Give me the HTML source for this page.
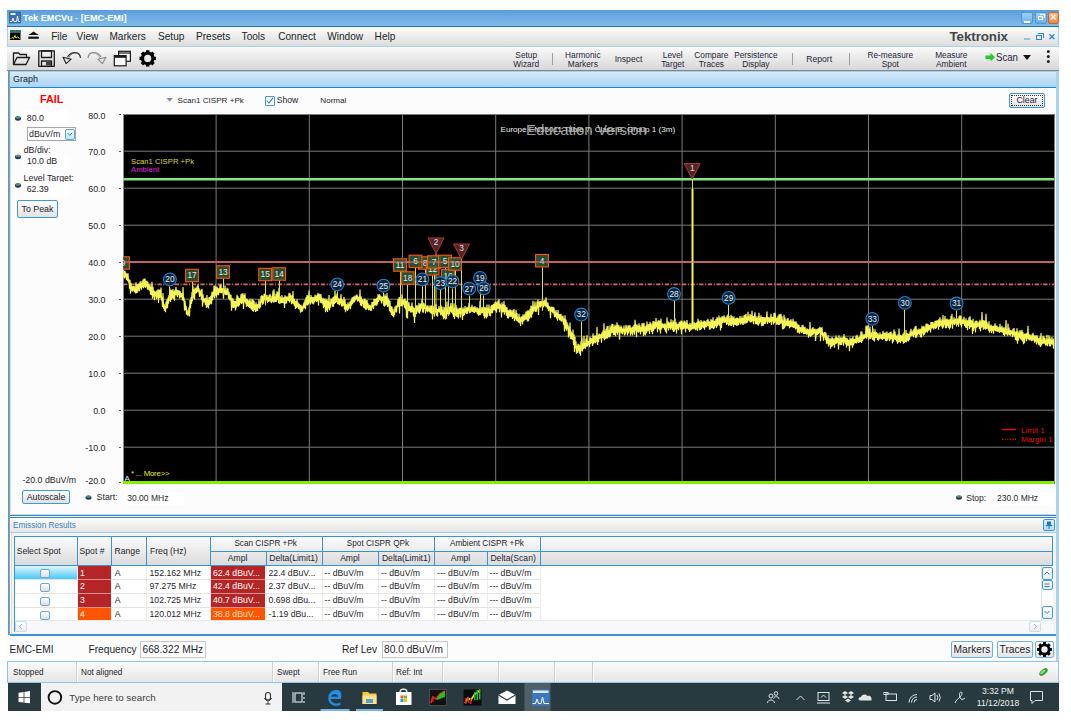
<!DOCTYPE html><html><head><meta charset="utf-8"><style>
html,body{margin:0;padding:0;width:1071px;height:720px;overflow:hidden;background:#fff;font-family:"Liberation Sans", sans-serif;}
.t{position:absolute;white-space:nowrap;}
.b{position:absolute;box-sizing:border-box;}
svg{position:absolute;left:0;top:0;}
</style></head><body>
<div class="b" style="left:7px;top:10px;width:1052px;height:673px;background:#fcfcfc;"></div>
<div class="b" style="left:7px;top:10px;width:1052px;height:17px;background:linear-gradient(#5b9cdb,#80bdec);border-bottom:1px solid #1b79c3;"></div>
<div class="b" style="left:7px;top:27px;width:1052px;height:20px;background:linear-gradient(#fcfcfc,#dcdcdc);border:1px solid #a6d2f0;border-top:none;"></div>
<div class="b" style="left:7px;top:47px;width:1052px;height:24px;background:linear-gradient(#fafafa,#d7d7d7);border-bottom:1px solid #858585;"></div>
<div class="b" style="left:8px;top:71px;width:1.2px;height:564px;background:#8a8a8a;"></div>
<div class="b" style="left:9.2px;top:71px;width:1.1px;height:564px;background:#5aaee4;"></div>
<div class="b" style="left:1055.5px;top:71px;width:3.5px;height:590px;background:#a8d4ee;"></div>
<div class="b" style="left:1055px;top:71px;width:1px;height:564px;background:#c8c8c8;"></div>
<div class="b" style="left:10px;top:71px;width:1046px;height:17px;background:linear-gradient(#d4eafa,#a9d4f4);border-top:1px solid #a0d0f0;border-bottom:1.5px solid #1f7fc8;"></div>
<div class="t" style="left:13px;top:74.1px;font-size:9px;line-height:10.8px;color:#1a1a2a;font-weight:normal;">Graph</div>
<div class="b" style="left:10px;top:88px;width:1046px;height:427px;background:#fcfcfc;border-left:1px solid #e0e0e0;border-bottom:1px solid #d8d8d8;"></div>
<div class="b" style="left:10px;top:515px;width:1046px;height:1px;background:#2587cc;"></div>
<div class="b" style="left:10px;top:516px;width:1046px;height:1px;background:#ffffff;"></div>
<div class="b" style="left:10px;top:517px;width:1046px;height:16px;background:linear-gradient(#fbfbfb,#e6e6e6);border-top:1px solid #2587cc;border-bottom:1px solid #9ccdee;"></div>
<div class="t" style="left:13px;top:520.6px;font-size:8.2px;line-height:9.8px;color:#3b7fc0;font-weight:normal;">Emission Results</div>
<div class="b" style="left:1043px;top:519px;width:12px;height:12px;background:linear-gradient(#e0f0fc,#b8dcf6);border:1px solid #3a96d8;border-radius:2px;"></div>
<svg width="1071" height="720"><g fill="#1a7ac8"><rect x="1047" y="521.5" width="4" height="4"/><rect x="1045.8" y="525" width="6.4" height="1.2"/><rect x="1048.5" y="526" width="1" height="3"/></g></svg>
<svg width="1071" height="720" style="pointer-events:none">
<rect x="9.5" y="12" width="11" height="11" fill="#3b6fae" stroke="#29578e" stroke-width="0.6"/>
<rect x="10.5" y="13" width="5" height="2" fill="#fff" opacity="0.9"/>
<polyline points="10,21.5 12,21.5 13,18 14,21.5 16.5,21.5 17.5,16 18.5,21.5 20,21.5" fill="none" stroke="#fff" stroke-width="0.9"/>
</svg>
<div class="t" style="left:23px;top:12.8px;font-size:9.2px;line-height:11.0px;color:#ffffff;font-weight:bold;">Tek EMCVu <span style="color:#c8e2f8">-</span> [EMC-EMI]</div>
<div class="b" style="left:1021px;top:12px;width:12px;height:12px;background:linear-gradient(#9fd0f6,#6eb0e8);border:1px solid #5496d2;border-radius:2px;"></div>
<div class="b" style="left:1024px;top:21px;width:6px;height:1.5px;background:#fff;"></div>
<div class="b" style="left:1035px;top:12px;width:12px;height:12px;background:linear-gradient(#9fd0f6,#6eb0e8);border:1px solid #5496d2;border-radius:2px;"></div>
<div class="b" style="left:1038px;top:16px;width:5px;height:4px;border:1px solid #fff;"></div>
<div class="b" style="left:1040px;top:14px;width:5px;height:4px;border:1px solid #fff;border-left:none;border-bottom:none;"></div>
<div class="b" style="left:1048px;top:12px;width:11px;height:12px;background:linear-gradient(#f8b888,#e88a48);border:1px solid #c06a30;border-radius:2px;"></div>
<div class="t" style="left:903.5px;width:300px;text-align:center;top:13.2px;font-size:8px;line-height:9.6px;color:#ffffff;font-weight:bold;">&#x2715;</div>
<svg width="1071" height="720">
<rect x="10" y="30" width="10.5" height="10" fill="#000"/>
<rect x="10" y="30" width="10.5" height="3" fill="#177a78"/>
<rect x="14.5" y="30.5" width="1.6" height="1" fill="#e84020"/>
<polyline points="10.5,39 12,37.5 13.5,38.5 15,35.5 16,38 17.5,37 19.5,38.5" fill="none" stroke="#e8e800" stroke-width="1"/>
<polygon points="28.5,35 33.6,31.6 38.7,35" fill="#111"/>
<rect x="28.3" y="36.6" width="10.5" height="2.2" fill="#111"/>
</svg>
<div class="t" style="left:51.2px;top:30.8px;font-size:10.1px;line-height:12.1px;color:#1e1e1e;font-weight:normal;">File</div>
<div class="t" style="left:76.6px;top:30.8px;font-size:10.1px;line-height:12.1px;color:#1e1e1e;font-weight:normal;">View</div>
<div class="t" style="left:109.4px;top:30.8px;font-size:10.1px;line-height:12.1px;color:#1e1e1e;font-weight:normal;">Markers</div>
<div class="t" style="left:158px;top:30.8px;font-size:10.1px;line-height:12.1px;color:#1e1e1e;font-weight:normal;">Setup</div>
<div class="t" style="left:196px;top:30.8px;font-size:10.1px;line-height:12.1px;color:#1e1e1e;font-weight:normal;">Presets</div>
<div class="t" style="left:241.6px;top:30.8px;font-size:10.1px;line-height:12.1px;color:#1e1e1e;font-weight:normal;">Tools</div>
<div class="t" style="left:278.2px;top:30.8px;font-size:10.1px;line-height:12.1px;color:#1e1e1e;font-weight:normal;">Connect</div>
<div class="t" style="left:327.2px;top:30.8px;font-size:10.1px;line-height:12.1px;color:#1e1e1e;font-weight:normal;">Window</div>
<div class="t" style="left:374.6px;top:30.8px;font-size:10.1px;line-height:12.1px;color:#1e1e1e;font-weight:normal;">Help</div>
<div class="t" style="left:949.5px;top:29.0px;font-size:13.4px;line-height:16.1px;color:#464646;font-weight:bold;letter-spacing:-0.1px;">Tektronix</div>
<div class="b" style="left:1024px;top:38px;width:6px;height:1.5px;background:#8ec4ea;"></div>
<div class="b" style="left:1036px;top:35px;width:6px;height:5px;border:1.5px solid #2a88d0;"></div>
<div class="b" style="left:1038px;top:33px;width:6px;height:5px;border:1.5px solid #2a88d0;border-left:none;border-bottom:none;"></div>
<div class="t" style="left:901.5px;width:300px;text-align:center;top:32.4px;font-size:8.5px;line-height:10.2px;color:#2a88d0;font-weight:bold;">&#x2715;</div>
<svg width="1071" height="720">
<g fill="none" stroke="#1a1a1a" stroke-width="1.3" stroke-linejoin="round">
<path d="M13.5,64.5 V53 H18.5 L20,54.5 H26.5 V57.5"/>
<path d="M13.5,64.5 L17,57.5 H29.5 L26,64.5 Z"/>
<rect x="38.8" y="50.8" width="15.5" height="15.5"/>
<rect x="41.5" y="51" width="10" height="6.5"/>
<rect x="41.5" y="61" width="10" height="5.3"/>
</g>
<rect x="46" y="62" width="5" height="3.5" fill="#444"/>
<path d="M80.5,58 C80,51.5 72,50.5 67.5,56.8" fill="none" stroke="#333" stroke-width="1.2"/>
<path d="M76.5,53 C73,52.5 70.5,54.5 68.8,57.8" fill="none" stroke="#555" stroke-width="0.8"/>
<polygon points="63,57.3 66.1,63.6 71.2,59.2" fill="#e0e0e0" stroke="#222" stroke-width="1.1" stroke-linejoin="round"/>
<path d="M88,58 C88.5,51.5 96.5,50.5 101,56.8" fill="none" stroke="#8a8a8a" stroke-width="1.2"/>
<path d="M92,53 C95.5,52.5 98,54.5 99.7,57.8" fill="none" stroke="#9a9a9a" stroke-width="0.8"/>
<polygon points="106,57.3 102.5,63.6 97.8,59.2" fill="#e4e4e4" stroke="#8a8a8a" stroke-width="1.1" stroke-linejoin="round"/>
<g fill="#fafafa" stroke="#1a1a1a" stroke-width="1.2">
<rect x="118.6" y="51.3" width="11.8" height="10"/>
<line x1="118.6" y1="53" x2="130.4" y2="53"/>
<rect x="114.3" y="55.6" width="11.8" height="10.2"/>
</g>
<rect x="114.3" y="55.6" width="11.8" height="2.2" fill="#1a1a1a"/>
<g transform="translate(147.7,58.4)">
<circle r="5.2" fill="none" stroke="#000" stroke-width="3.2"/>
<g fill="#000">
<rect x="-1.7" y="-8.2" width="3.4" height="3.6"/><rect x="-1.7" y="4.6" width="3.4" height="3.6"/>
<rect x="-8.2" y="-1.7" width="3.6" height="3.4"/><rect x="4.6" y="-1.7" width="3.6" height="3.4"/>
<g transform="rotate(45)"><rect x="-1.7" y="-8.2" width="3.4" height="3.6"/><rect x="-1.7" y="4.6" width="3.4" height="3.6"/>
<rect x="-8.2" y="-1.7" width="3.6" height="3.4"/><rect x="4.6" y="-1.7" width="3.6" height="3.4"/></g>
</g></g>
</svg>
<div class="t" style="left:376.20000000000005px;width:300px;text-align:center;top:49.5px;font-size:8.3px;line-height:10.0px;color:#1e1e3a;font-weight:normal;">Setup</div>
<div class="t" style="left:376.20000000000005px;width:300px;text-align:center;top:59.2px;font-size:8.3px;line-height:10.0px;color:#1e1e3a;font-weight:normal;">Wizard</div>
<div class="t" style="left:432.79999999999995px;width:300px;text-align:center;top:49.5px;font-size:8.3px;line-height:10.0px;color:#1e1e3a;font-weight:normal;">Harmonic</div>
<div class="t" style="left:432.79999999999995px;width:300px;text-align:center;top:59.2px;font-size:8.3px;line-height:10.0px;color:#1e1e3a;font-weight:normal;">Markers</div>
<div class="t" style="left:478.5px;width:300px;text-align:center;top:54.3px;font-size:8.6px;line-height:10.3px;color:#1e1e3a;font-weight:normal;">Inspect</div>
<div class="t" style="left:522.7px;width:300px;text-align:center;top:49.5px;font-size:8.3px;line-height:10.0px;color:#1e1e3a;font-weight:normal;">Level</div>
<div class="t" style="left:522.7px;width:300px;text-align:center;top:59.2px;font-size:8.3px;line-height:10.0px;color:#1e1e3a;font-weight:normal;">Target</div>
<div class="t" style="left:561.4px;width:300px;text-align:center;top:49.5px;font-size:8.3px;line-height:10.0px;color:#1e1e3a;font-weight:normal;">Compare</div>
<div class="t" style="left:561.4px;width:300px;text-align:center;top:59.2px;font-size:8.3px;line-height:10.0px;color:#1e1e3a;font-weight:normal;">Traces</div>
<div class="t" style="left:605.9px;width:300px;text-align:center;top:49.5px;font-size:8.3px;line-height:10.0px;color:#1e1e3a;font-weight:normal;">Persistence</div>
<div class="t" style="left:605.9px;width:300px;text-align:center;top:59.2px;font-size:8.3px;line-height:10.0px;color:#1e1e3a;font-weight:normal;">Display</div>
<div class="t" style="left:669.2px;width:300px;text-align:center;top:54.3px;font-size:8.6px;line-height:10.3px;color:#1e1e3a;font-weight:normal;">Report</div>
<div class="t" style="left:740.3px;width:300px;text-align:center;top:49.5px;font-size:8.3px;line-height:10.0px;color:#1e1e3a;font-weight:normal;">Re-measure</div>
<div class="t" style="left:740.3px;width:300px;text-align:center;top:59.2px;font-size:8.3px;line-height:10.0px;color:#1e1e3a;font-weight:normal;">Spot</div>
<div class="t" style="left:801.3px;width:300px;text-align:center;top:49.5px;font-size:8.3px;line-height:10.0px;color:#1e1e3a;font-weight:normal;">Measure</div>
<div class="t" style="left:801.3px;width:300px;text-align:center;top:59.2px;font-size:8.3px;line-height:10.0px;color:#1e1e3a;font-weight:normal;">Ambient</div>
<div class="b" style="left:552px;top:53px;width:1px;height:12px;background:#a0a0a0;"></div>
<div class="b" style="left:791.5px;top:53px;width:1px;height:12px;background:#a0a0a0;"></div>
<div class="b" style="left:848.5px;top:53px;width:1px;height:12px;background:#a0a0a0;"></div>
<svg width="1071" height="720">
<polygon points="985.5,55.5 990.5,55.5 990.5,52.8 995,57.2 990.5,61.6 990.5,58.9 985.5,58.9" fill="#22cc22"/>
<polygon points="1023,55 1031,55 1027,60" fill="#111"/>
<circle cx="1048.3" cy="51.5" r="1.5" fill="#222"/><circle cx="1048.3" cy="56.5" r="1.5" fill="#222"/><circle cx="1048.3" cy="61.5" r="1.5" fill="#222"/>
</svg>
<div class="t" style="left:995.5px;top:50.8px;font-size:11.2px;line-height:13.4px;color:#1e1e3a;font-weight:normal;transform:scaleX(0.86);transform-origin:0 0;">Scan</div>
<div class="t" style="left:40px;top:93.3px;font-size:10.8px;line-height:13.0px;color:#ff0000;font-weight:bold;">FAIL</div>
<div class="b" style="left:23px;top:110px;width:45px;height:16px;background:#ffffff;"></div>
<svg width="1071" height="720"><ellipse cx="18" cy="118.5" rx="3" ry="2.2" fill="#2a2a7a"/><ellipse cx="18" cy="117.5" rx="2.5" ry="1.2" fill="#4aa04a"/></svg>
<div class="t" style="left:26.8px;top:113.2px;font-size:8.8px;line-height:10.6px;color:#1e1e2a;font-weight:normal;">80.0</div>
<div class="b" style="left:27px;top:127px;width:49px;height:14px;background:#fff;border:1px solid #a8a8a8;"></div>
<div class="t" style="left:29px;top:128.9px;font-size:8.8px;line-height:10.6px;color:#1e1e2a;font-weight:normal;">dBuV/m</div>
<div class="b" style="left:65px;top:128.5px;width:9.5px;height:11px;background:linear-gradient(#f0f8ff,#c8e4f8);border:1px solid #5aa8e0;border-radius:2px;"></div>
<svg width="1071" height="720"><polyline points="67.5,133 69.7,135.3 72,133" fill="none" stroke="#2a7ac8" stroke-width="1"/></svg>
<div class="t" style="left:23.7px;top:145.0px;font-size:8.8px;line-height:10.6px;color:#1e1e2a;font-weight:normal;">dB/div:</div>
<div class="b" style="left:23px;top:154px;width:45px;height:15px;background:#ffffff;"></div>
<svg width="1071" height="720"><ellipse cx="18" cy="157" rx="3" ry="2.2" fill="#2a2a7a"/><ellipse cx="18" cy="156" rx="2.5" ry="1.2" fill="#4aa04a"/></svg>
<div class="t" style="left:26.9px;top:155.9px;font-size:8.8px;line-height:10.6px;color:#1e1e2a;font-weight:normal;">10.0 dB</div>
<div class="t" style="left:23.6px;top:172.5px;font-size:8.8px;line-height:10.6px;color:#1e1e2a;font-weight:normal;">Level Target:</div>
<div class="b" style="left:23px;top:182px;width:45px;height:15px;background:#ffffff;"></div>
<svg width="1071" height="720"><ellipse cx="18" cy="185.5" rx="3" ry="2.2" fill="#2a2a7a"/><ellipse cx="18" cy="184.5" rx="2.5" ry="1.2" fill="#4aa04a"/></svg>
<div class="t" style="left:26.7px;top:184.1px;font-size:8.8px;line-height:10.6px;color:#1e1e2a;font-weight:normal;">62.39</div>
<div class="b" style="left:17px;top:200px;width:41px;height:18px;background:linear-gradient(#fdfdfd,#e2e2e2);border:1px solid #3c9ad8;border-radius:2px;"></div>
<div class="t" style="left:-112.5px;width:300px;text-align:center;top:203.9px;font-size:8.8px;line-height:10.6px;color:#1e1e2a;font-weight:normal;">To Peak</div>
<div class="t" style="left:-194.5px;width:300px;text-align:right;top:110.9px;font-size:8.9px;line-height:10.7px;color:#1e1e2a;font-weight:normal;">80.0</div>
<div class="b" style="left:119px;top:114px;width:2px;height:1px;background:#555;"></div>
<div class="t" style="left:-194.5px;width:300px;text-align:right;top:146.9px;font-size:8.9px;line-height:10.7px;color:#1e1e2a;font-weight:normal;">70.0</div>
<div class="b" style="left:119px;top:151px;width:2px;height:1px;background:#555;"></div>
<div class="t" style="left:-194.5px;width:300px;text-align:right;top:183.9px;font-size:8.9px;line-height:10.7px;color:#1e1e2a;font-weight:normal;">60.0</div>
<div class="b" style="left:119px;top:188px;width:2px;height:1px;background:#555;"></div>
<div class="t" style="left:-194.5px;width:300px;text-align:right;top:220.9px;font-size:8.9px;line-height:10.7px;color:#1e1e2a;font-weight:normal;">50.0</div>
<div class="b" style="left:119px;top:225px;width:2px;height:1px;background:#555;"></div>
<div class="t" style="left:-194.5px;width:300px;text-align:right;top:257.9px;font-size:8.9px;line-height:10.7px;color:#1e1e2a;font-weight:normal;">40.0</div>
<div class="b" style="left:119px;top:262px;width:2px;height:1px;background:#555;"></div>
<div class="t" style="left:-194.5px;width:300px;text-align:right;top:294.9px;font-size:8.9px;line-height:10.7px;color:#1e1e2a;font-weight:normal;">30.0</div>
<div class="b" style="left:119px;top:299px;width:2px;height:1px;background:#555;"></div>
<div class="t" style="left:-194.5px;width:300px;text-align:right;top:331.9px;font-size:8.9px;line-height:10.7px;color:#1e1e2a;font-weight:normal;">20.0</div>
<div class="b" style="left:119px;top:336px;width:2px;height:1px;background:#555;"></div>
<div class="t" style="left:-194.5px;width:300px;text-align:right;top:368.9px;font-size:8.9px;line-height:10.7px;color:#1e1e2a;font-weight:normal;">10.0</div>
<div class="b" style="left:119px;top:373px;width:2px;height:1px;background:#555;"></div>
<div class="t" style="left:-194.5px;width:300px;text-align:right;top:405.9px;font-size:8.9px;line-height:10.7px;color:#1e1e2a;font-weight:normal;">0.0</div>
<div class="b" style="left:119px;top:410px;width:2px;height:1px;background:#555;"></div>
<div class="t" style="left:-194.5px;width:300px;text-align:right;top:442.9px;font-size:8.9px;line-height:10.7px;color:#1e1e2a;font-weight:normal;">-10.0</div>
<div class="b" style="left:119px;top:447px;width:2px;height:1px;background:#555;"></div>
<div class="t" style="left:-194.5px;width:300px;text-align:right;top:475.5px;font-size:8.9px;line-height:10.7px;color:#1e1e2a;font-weight:normal;">-20.0</div>
<div class="b" style="left:119px;top:482px;width:2px;height:1px;background:#555;"></div>
<div class="t" style="left:22.4px;top:474.9px;font-size:8.8px;line-height:10.6px;color:#1e1e2a;font-weight:normal;">-20.0 dBuV/m</div>
<div class="b" style="left:22px;top:490px;width:48px;height:14px;background:linear-gradient(#fdfdfd,#e0e0e0);border:1px solid #3c9ad8;border-radius:2px;"></div>
<div class="t" style="left:-104px;width:300px;text-align:center;top:491.9px;font-size:8.8px;line-height:10.6px;color:#1e1e2a;font-weight:normal;">Autoscale</div>
<svg width="1071" height="720"><ellipse cx="88.5" cy="497.6" rx="3" ry="2.2" fill="#2a2a7a"/><ellipse cx="88.5" cy="496.6" rx="2.5" ry="1.2" fill="#4aa04a"/></svg>
<div class="t" style="left:96.6px;top:492.3px;font-size:8.8px;line-height:10.6px;color:#1e1e2a;font-weight:normal;">Start:</div>
<div class="b" style="left:124px;top:490px;width:60px;height:15px;background:#ffffff;"></div>
<div class="t" style="left:127.3px;top:492.5px;font-size:8.5px;line-height:10.2px;color:#1e1e2a;font-weight:normal;">30.00 MHz</div>
<svg width="1071" height="720"><ellipse cx="959" cy="497.6" rx="3" ry="2.2" fill="#2a2a7a"/><ellipse cx="959" cy="496.6" rx="2.5" ry="1.2" fill="#4aa04a"/></svg>
<div class="t" style="left:966.3px;top:492.5px;font-size:8.5px;line-height:10.2px;color:#1e1e2a;font-weight:normal;">Stop:</div>
<div class="b" style="left:994px;top:490px;width:60px;height:15px;background:#ffffff;"></div>
<div class="t" style="left:997px;top:492.5px;font-size:8.5px;line-height:10.2px;color:#1e1e2a;font-weight:normal;">230.0 MHz</div>
<svg width="1071" height="720"><polygon points="166.5,98 173,98 169.7,101.5" fill="#7a8aa8"/></svg>
<div class="t" style="left:177.5px;top:96.1px;font-size:8.1px;line-height:9.7px;color:#1e1e2a;font-weight:normal;">Scan1 CISPR +Pk</div>
<div class="b" style="left:265px;top:96px;width:9.5px;height:9.5px;background:#fff;border:1px solid #3c9ad8;border-radius:1px;"></div>
<svg width="1071" height="720"><polyline points="266.8,100.5 269,103 273,97.8" fill="none" stroke="#2a7ac8" stroke-width="1.1"/></svg>
<div class="t" style="left:276.8px;top:95.4px;font-size:8.6px;line-height:10.3px;color:#1e1e2a;font-weight:normal;">Show</div>
<div class="t" style="left:320.3px;top:96.1px;font-size:8.1px;line-height:9.7px;color:#1e1e2a;font-weight:normal;">Normal</div>
<div class="b" style="left:1009px;top:93px;width:36px;height:15px;background:linear-gradient(#fdfdfd,#e2e2e2);border:1px solid #3c9ad8;border-radius:2px;"></div>
<div class="b" style="left:1011px;top:95px;width:32px;height:11px;border:1px dotted #333;"></div>
<div class="t" style="left:877px;width:300px;text-align:center;top:95.3px;font-size:8.8px;line-height:10.6px;color:#1e1e2a;font-weight:normal;">Clear</div>
<svg width="1071" height="720"><defs><clipPath id="pc"><rect x="123" y="114" width="931.5" height="370"/></clipPath></defs>
<rect x="123" y="114" width="931.5" height="370" fill="#000"/>
<g clip-path="url(#pc)">
<line x1="123" y1="114.5" x2="1054.5" y2="114.5" stroke="#7a7a7a" stroke-width="1"/>
<line x1="123.5" y1="114" x2="123.5" y2="484" stroke="#8a8a8a" stroke-width="1"/>
<line x1="216.1" y1="114" x2="216.1" y2="484" stroke="#7a7a7a" stroke-width="1"/>
<line x1="309.3" y1="114" x2="309.3" y2="484" stroke="#7a7a7a" stroke-width="1"/>
<line x1="402.5" y1="114" x2="402.5" y2="484" stroke="#7a7a7a" stroke-width="1"/>
<line x1="495.7" y1="114" x2="495.7" y2="484" stroke="#7a7a7a" stroke-width="1"/>
<line x1="588.9" y1="114" x2="588.9" y2="484" stroke="#7a7a7a" stroke-width="1"/>
<line x1="682.1" y1="114" x2="682.1" y2="484" stroke="#7a7a7a" stroke-width="1"/>
<line x1="775.3" y1="114" x2="775.3" y2="484" stroke="#7a7a7a" stroke-width="1"/>
<line x1="868.5" y1="114" x2="868.5" y2="484" stroke="#7a7a7a" stroke-width="1"/>
<line x1="961.7" y1="114" x2="961.7" y2="484" stroke="#7a7a7a" stroke-width="1"/>
<line x1="123" y1="151.2" x2="1054.5" y2="151.2" stroke="#7a7a7a" stroke-width="1"/>
<line x1="123" y1="188.2" x2="1054.5" y2="188.2" stroke="#7a7a7a" stroke-width="1"/>
<line x1="123" y1="225.2" x2="1054.5" y2="225.2" stroke="#7a7a7a" stroke-width="1"/>
<line x1="123" y1="262.2" x2="1054.5" y2="262.2" stroke="#7a7a7a" stroke-width="1"/>
<line x1="123" y1="299.2" x2="1054.5" y2="299.2" stroke="#7a7a7a" stroke-width="1"/>
<line x1="123" y1="336.2" x2="1054.5" y2="336.2" stroke="#7a7a7a" stroke-width="1"/>
<line x1="123" y1="373.2" x2="1054.5" y2="373.2" stroke="#7a7a7a" stroke-width="1"/>
<line x1="123" y1="410.2" x2="1054.5" y2="410.2" stroke="#7a7a7a" stroke-width="1"/>
<line x1="123" y1="447.2" x2="1054.5" y2="447.2" stroke="#7a7a7a" stroke-width="1"/>
<text x="500.5" y="131.8" font-size="8.1" fill="#f0f0f0" font-family="Liberation Sans">Europe EN55011 Table 7, Class B, Group 1 (3m)</text>
<text x="526" y="134.5" font-size="15" fill="#b4b4b4" fill-opacity="0.9" font-family="Liberation Sans">Education Version</text>
<text x="131" y="164" font-size="7.7" fill="#d8d840" font-family="Liberation Sans">Scan1 CISPR +Pk</text>
<text x="131" y="172" font-size="7.7" fill="#e020e0" font-family="Liberation Sans">Ambient</text>
<line x1="1002" y1="429.5" x2="1016" y2="429.5" stroke="#e01010" stroke-width="1.5"/>
<line x1="1002" y1="439.3" x2="1016" y2="439.3" stroke="#e01010" stroke-width="1.2" stroke-dasharray="1.3,1.3"/>
<text x="1021" y="432.5" font-size="8.1" fill="#e01010" font-family="Liberation Sans">Limit 1</text>
<text x="1021" y="442.3" font-size="8.1" fill="#e01010" font-family="Liberation Sans">Margin 1</text>
<text x="124.6" y="481" font-size="8" fill="#f0f0f0" font-family="Liberation Sans">A</text>
<text x="131" y="476" font-size="7.8" fill="#e8e830" font-family="Liberation Sans" letter-spacing="-0.2">* ... More&gt;&gt;</text>
<line x1="123" y1="179.3" x2="1054.5" y2="179.3" stroke="#80e680" stroke-width="2.6"/>
<line x1="123" y1="262" x2="1054.5" y2="262" stroke="#b85454" stroke-width="2"/>
<line x1="123" y1="284.4" x2="1054.5" y2="284.4" stroke="#d06a6a" stroke-width="1.6" stroke-dasharray="4.3,1.6,1.1,1.6"/>
<rect x="123" y="481" width="931.5" height="3" fill="#80f000"/>
<polygon points="123.0,270.3 123.5,271.1 124.0,271.5 124.5,272.1 125.0,273.2 125.5,273.3 126.0,273.2 126.5,274.1 127.0,275.8 127.5,276.6 128.0,278.3 128.5,279.4 129.0,280.7 129.5,281.7 130.0,283.4 130.5,284.7 131.0,285.6 131.5,285.6 132.0,285.3 132.5,286.3 133.0,286.2 133.5,285.4 134.0,286.3 134.5,286.6 135.0,286.2 135.5,286.1 136.0,287.1 136.5,286.6 137.0,287.1 137.5,286.3 138.0,286.2 138.5,285.6 139.0,285.5 139.5,284.9 140.0,284.1 140.5,284.3 141.0,283.5 141.5,283.5 142.0,283.2 142.5,282.2 143.0,281.7 143.5,281.8 144.0,281.4 144.5,280.4 145.0,281.3 145.5,281.6 146.0,282.1 146.5,282.3 147.0,283.3 147.5,284.1 148.0,285.0 148.5,285.3 149.0,285.7 149.5,287.0 150.0,287.7 150.5,287.6 151.0,289.4 151.5,290.2 152.0,290.6 152.5,290.9 153.0,291.3 153.5,291.2 154.0,291.0 154.5,291.3 155.0,291.7 155.5,291.5 156.0,291.6 156.5,291.3 157.0,291.7 157.5,292.0 158.0,291.7 158.5,291.3 159.0,291.0 159.5,291.1 160.0,291.6 160.5,293.5 161.0,295.3 161.5,296.3 162.0,297.7 162.5,299.3 163.0,301.3 163.5,302.4 164.0,303.8 164.5,306.3 165.0,307.2 165.5,306.4 166.0,304.0 166.5,302.2 167.0,300.9 167.5,300.2 168.0,298.7 168.5,296.6 169.0,296.0 169.5,294.4 170.0,293.3 170.5,293.3 171.0,292.9 171.5,292.4 172.0,292.4 172.5,292.3 173.0,292.3 173.5,292.0 174.0,291.1 174.5,291.5 175.0,290.8 175.5,291.3 176.0,290.3 176.5,290.2 177.0,290.5 177.5,289.2 178.0,290.4 178.5,290.7 179.0,290.6 179.5,291.2 180.0,290.9 180.5,292.6 181.0,293.2 181.5,293.7 182.0,294.0 182.5,294.9 183.0,295.3 183.5,297.2 184.0,298.4 184.5,300.9 185.0,302.1 185.5,304.3 186.0,306.1 186.5,306.6 187.0,308.9 187.5,311.1 188.0,313.1 188.5,310.7 189.0,308.4 189.5,305.6 190.0,303.6 190.5,301.2 191.0,299.5 191.5,296.8 192.0,294.5 192.5,292.4 193.0,291.5 193.5,291.5 194.0,291.3 194.5,290.8 195.0,290.3 195.5,288.7 196.0,289.6 196.5,289.1 197.0,288.1 197.5,288.1 198.0,287.6 198.5,288.5 199.0,288.6 199.5,290.4 200.0,290.6 200.5,291.4 201.0,293.2 201.5,294.4 202.0,295.3 202.5,296.2 203.0,297.1 203.5,297.9 204.0,298.5 204.5,298.2 205.0,299.7 205.5,299.8 206.0,300.8 206.5,301.1 207.0,301.5 207.5,301.9 208.0,302.8 208.5,301.5 209.0,300.5 209.5,299.0 210.0,298.0 210.5,296.6 211.0,295.5 211.5,294.6 212.0,293.0 212.5,292.0 213.0,291.9 213.5,291.6 214.0,291.2 214.5,291.2 215.0,290.5 215.5,290.3 216.0,289.8 216.5,289.1 217.0,288.9 217.5,288.5 218.0,289.3 218.5,288.5 219.0,289.3 219.5,288.1 220.0,287.9 220.5,288.1 221.0,288.8 221.5,288.7 222.0,288.0 222.5,288.8 223.0,288.3 223.5,288.9 224.0,289.3 224.5,289.0 225.0,289.8 225.5,289.8 226.0,290.2 226.5,290.0 227.0,289.9 227.5,291.1 228.0,292.3 228.5,292.8 229.0,294.3 229.5,294.3 230.0,295.8 230.5,297.0 231.0,297.8 231.5,298.9 232.0,300.1 232.5,300.8 233.0,299.8 233.5,302.0 234.0,302.0 234.5,302.9 235.0,303.0 235.5,303.7 236.0,304.7 236.5,303.9 237.0,302.5 237.5,302.7 238.0,301.1 238.5,300.9 239.0,298.9 239.5,299.3 240.0,298.3 240.5,297.5 241.0,296.7 241.5,296.8 242.0,296.9 242.5,296.7 243.0,297.9 243.5,298.2 244.0,298.3 244.5,298.2 245.0,297.9 245.5,299.1 246.0,299.2 246.5,299.3 247.0,299.7 247.5,299.7 248.0,300.4 248.5,300.4 249.0,299.7 249.5,300.9 250.0,301.4 250.5,301.8 251.0,301.7 251.5,302.6 252.0,302.8 252.5,302.5 253.0,303.0 253.5,303.8 254.0,304.4 254.5,303.9 255.0,304.2 255.5,305.1 256.0,304.8 256.5,305.5 257.0,305.9 257.5,304.1 258.0,304.1 258.5,303.7 259.0,302.7 259.5,302.2 260.0,301.6 260.5,300.6 261.0,300.1 261.5,298.7 262.0,298.8 262.5,298.0 263.0,297.2 263.5,296.2 264.0,295.9 264.5,295.4 265.0,296.4 265.5,296.6 266.0,296.7 266.5,296.8 267.0,297.1 267.5,297.0 268.0,297.4 268.5,296.7 269.0,297.1 269.5,297.8 270.0,297.3 270.5,298.4 271.0,298.5 271.5,298.5 272.0,297.7 272.5,298.1 273.0,295.7 273.5,297.1 274.0,297.6 274.5,297.5 275.0,297.4 275.5,296.0 276.0,296.3 276.5,296.6 277.0,296.6 277.5,295.3 278.0,295.7 278.5,296.4 279.0,294.7 279.5,296.6 280.0,296.8 280.5,297.7 281.0,298.0 281.5,297.7 282.0,298.6 282.5,298.5 283.0,299.2 283.5,297.8 284.0,299.1 284.5,297.7 285.0,299.2 285.5,298.3 286.0,298.1 286.5,298.1 287.0,296.5 287.5,296.9 288.0,296.6 288.5,296.7 289.0,296.5 289.5,296.0 290.0,295.1 290.5,295.3 291.0,295.1 291.5,295.2 292.0,296.7 292.5,297.4 293.0,297.7 293.5,298.5 294.0,299.1 294.5,298.3 295.0,300.2 295.5,301.1 296.0,302.0 296.5,302.0 297.0,303.0 297.5,303.7 298.0,302.7 298.5,304.8 299.0,305.1 299.5,304.9 300.0,305.2 300.5,306.0 301.0,306.7 301.5,306.4 302.0,308.0 302.5,307.4 303.0,305.7 303.5,305.3 304.0,304.2 304.5,302.3 305.0,302.0 305.5,301.0 306.0,300.1 306.5,299.0 307.0,298.3 307.5,298.1 308.0,298.3 308.5,297.7 309.0,297.9 309.5,297.8 310.0,297.8 310.5,297.0 311.0,298.2 311.5,297.6 312.0,298.0 312.5,298.0 313.0,297.9 313.5,298.2 314.0,298.0 314.5,297.6 315.0,297.0 315.5,297.3 316.0,297.5 316.5,296.3 317.0,295.6 317.5,296.8 318.0,296.6 318.5,296.5 319.0,296.3 319.5,296.2 320.0,295.1 320.5,296.7 321.0,297.3 321.5,298.1 322.0,298.5 322.5,299.3 323.0,300.2 323.5,300.5 324.0,301.7 324.5,302.2 325.0,302.5 325.5,303.6 326.0,304.0 326.5,304.0 327.0,305.0 327.5,304.1 328.0,304.0 328.5,303.7 329.0,302.9 329.5,302.4 330.0,301.4 330.5,301.4 331.0,299.9 331.5,300.4 332.0,298.9 332.5,299.3 333.0,298.1 333.5,297.6 334.0,297.9 334.5,298.0 335.0,297.1 335.5,297.8 336.0,297.0 336.5,297.6 337.0,297.5 337.5,298.4 338.0,298.7 338.5,299.1 339.0,298.3 339.5,298.5 340.0,299.2 340.5,299.2 341.0,299.6 341.5,299.2 342.0,300.5 342.5,300.6 343.0,300.5 343.5,301.9 344.0,302.5 344.5,302.3 345.0,302.5 345.5,303.5 346.0,303.7 346.5,304.3 347.0,304.7 347.5,305.1 348.0,304.9 348.5,303.9 349.0,304.3 349.5,303.7 350.0,302.8 350.5,301.3 351.0,302.0 351.5,300.6 352.0,299.1 352.5,299.7 353.0,299.5 353.5,298.9 354.0,296.7 354.5,297.4 355.0,296.2 355.5,296.3 356.0,295.8 356.5,296.0 357.0,295.6 357.5,296.3 358.0,296.3 358.5,297.3 359.0,297.7 359.5,297.5 360.0,297.2 360.5,298.5 361.0,298.1 361.5,298.2 362.0,298.7 362.5,299.6 363.0,299.0 363.5,301.0 364.0,300.9 364.5,301.9 365.0,301.8 365.5,302.4 366.0,303.2 366.5,303.9 367.0,304.3 367.5,304.9 368.0,304.8 368.5,305.9 369.0,306.2 369.5,306.0 370.0,306.5 370.5,306.2 371.0,305.8 371.5,305.2 372.0,304.0 372.5,303.4 373.0,302.9 373.5,302.6 374.0,302.0 374.5,301.0 375.0,300.4 375.5,299.8 376.0,299.6 376.5,298.4 377.0,298.4 377.5,298.0 378.0,297.2 378.5,297.0 379.0,296.0 379.5,295.7 380.0,295.7 380.5,296.3 381.0,296.8 381.5,296.1 382.0,296.8 382.5,296.5 383.0,296.8 383.5,297.1 384.0,296.8 384.5,297.5 385.0,297.9 385.5,297.8 386.0,297.8 386.5,298.6 387.0,298.9 387.5,299.8 388.0,300.8 388.5,302.1 389.0,303.3 389.5,304.8 390.0,306.1 390.5,307.2 391.0,308.0 391.5,309.0 392.0,310.7 392.5,312.2 393.0,312.5 393.5,312.0 394.0,310.7 394.5,309.6 395.0,308.5 395.5,308.2 396.0,307.1 396.5,305.4 397.0,304.9 397.5,303.9 398.0,302.1 398.5,301.8 399.0,300.6 399.5,300.0 400.0,298.6 400.5,299.0 401.0,299.5 401.5,299.6 402.0,299.2 402.5,300.1 403.0,300.9 403.5,300.8 404.0,300.9 404.5,301.3 405.0,301.9 405.5,302.8 406.0,302.7 406.5,303.6 407.0,303.0 407.5,304.5 408.0,304.1 408.5,305.2 409.0,305.0 409.5,306.0 410.0,305.8 410.5,306.6 411.0,306.8 411.5,307.2 412.0,308.3 412.5,307.8 413.0,309.1 413.5,309.1 414.0,310.1 414.5,310.4 415.0,310.3 415.5,310.7 416.0,309.0 416.5,309.1 417.0,307.5 417.5,306.2 418.0,307.0 418.5,305.0 419.0,305.4 419.5,304.5 420.0,304.3 420.5,304.3 421.0,304.2 421.5,303.7 422.0,304.1 422.5,304.7 423.0,305.0 423.5,304.5 424.0,304.5 424.5,304.5 425.0,305.4 425.5,305.1 426.0,306.5 426.5,306.7 427.0,306.1 427.5,307.2 428.0,307.5 428.5,307.0 429.0,307.4 429.5,308.0 430.0,308.0 430.5,307.9 431.0,308.3 431.5,308.5 432.0,309.1 432.5,308.4 433.0,309.1 433.5,308.4 434.0,308.1 434.5,308.6 435.0,309.2 435.5,309.2 436.0,308.4 436.5,308.3 437.0,309.2 437.5,309.0 438.0,308.8 438.5,308.8 439.0,308.7 439.5,308.8 440.0,308.6 440.5,308.8 441.0,309.3 441.5,309.2 442.0,309.9 442.5,309.9 443.0,308.8 443.5,310.3 444.0,310.7 444.5,310.2 445.0,310.1 445.5,309.9 446.0,309.9 446.5,310.3 447.0,308.3 447.5,309.4 448.0,308.5 448.5,308.8 449.0,306.9 449.5,306.7 450.0,307.3 450.5,308.0 451.0,307.3 451.5,307.6 452.0,307.4 452.5,307.8 453.0,307.7 453.5,308.3 454.0,308.2 454.5,308.5 455.0,308.4 455.5,308.7 456.0,308.6 456.5,309.0 457.0,309.5 457.5,309.4 458.0,309.1 458.5,309.6 459.0,308.5 459.5,309.6 460.0,309.5 460.5,309.3 461.0,308.9 461.5,308.5 462.0,309.4 462.5,308.7 463.0,308.5 463.5,308.2 464.0,309.1 464.5,308.5 465.0,309.0 465.5,308.4 466.0,308.5 466.5,307.5 467.0,308.2 467.5,308.2 468.0,307.9 468.5,308.0 469.0,307.3 469.5,307.2 470.0,307.4 470.5,307.6 471.0,306.1 471.5,307.5 472.0,307.7 472.5,306.5 473.0,308.0 473.5,307.3 474.0,307.7 474.5,307.6 475.0,308.0 475.5,308.3 476.0,308.5 476.5,308.2 477.0,308.5 477.5,308.6 478.0,308.3 478.5,308.7 479.0,308.9 479.5,308.0 480.0,309.1 480.5,308.6 481.0,308.8 481.5,309.7 482.0,308.8 482.5,309.5 483.0,309.4 483.5,309.2 484.0,309.9 484.5,309.1 485.0,309.0 485.5,309.2 486.0,308.9 486.5,309.7 487.0,309.4 487.5,309.6 488.0,308.4 488.5,309.0 489.0,308.4 489.5,309.6 490.0,309.5 490.5,309.1 491.0,308.5 491.5,307.5 492.0,307.6 492.5,307.2 493.0,307.3 493.5,306.8 494.0,306.4 494.5,306.2 495.0,306.2 495.5,305.7 496.0,305.3 496.5,305.4 497.0,304.9 497.5,305.3 498.0,305.0 498.5,304.8 499.0,304.7 499.5,304.6 500.0,303.3 500.5,303.9 501.0,304.9 501.5,305.5 502.0,305.4 502.5,306.5 503.0,307.1 503.5,307.1 504.0,306.8 504.5,308.2 505.0,307.8 505.5,308.4 506.0,308.4 506.5,308.9 507.0,309.5 507.5,310.0 508.0,310.6 508.5,310.5 509.0,310.7 509.5,310.8 510.0,310.4 510.5,311.3 511.0,311.7 511.5,311.8 512.0,312.9 512.5,313.0 513.0,312.4 513.5,312.4 514.0,313.9 514.5,314.0 515.0,314.4 515.5,314.8 516.0,315.2 516.5,315.3 517.0,316.0 517.5,316.4 518.0,317.3 518.5,317.4 519.0,318.4 519.5,318.0 520.0,318.3 520.5,318.7 521.0,317.6 521.5,316.6 522.0,316.5 522.5,316.8 523.0,317.0 523.5,316.2 524.0,314.9 524.5,315.8 525.0,314.6 525.5,314.3 526.0,314.3 526.5,314.1 527.0,313.6 527.5,313.1 528.0,312.9 528.5,312.0 529.0,311.7 529.5,311.6 530.0,310.4 530.5,310.2 531.0,308.6 531.5,309.8 532.0,308.2 532.5,309.0 533.0,308.8 533.5,307.9 534.0,307.7 534.5,307.3 535.0,306.8 535.5,306.7 536.0,306.2 536.5,305.4 537.0,304.7 537.5,304.9 538.0,304.0 538.5,303.8 539.0,303.5 539.5,303.1 540.0,301.3 540.5,302.8 541.0,302.1 541.5,301.3 542.0,302.6 542.5,302.3 543.0,301.7 543.5,301.2 544.0,302.1 544.5,302.0 545.0,302.2 545.5,301.9 546.0,302.4 546.5,303.5 547.0,303.0 547.5,304.6 548.0,304.0 548.5,305.0 549.0,306.2 549.5,306.1 550.0,306.4 550.5,306.7 551.0,308.0 551.5,308.2 552.0,308.1 552.5,308.9 553.0,309.8 553.5,310.3 554.0,310.8 554.5,310.4 555.0,311.2 555.5,311.7 556.0,312.5 556.5,312.8 557.0,313.2 557.5,312.3 558.0,313.8 558.5,314.5 559.0,314.9 559.5,315.1 560.0,315.6 560.5,316.1 561.0,316.1 561.5,316.2 562.0,317.7 562.5,317.4 563.0,318.5 563.5,318.4 564.0,319.0 564.5,320.2 565.0,319.8 565.5,321.3 566.0,322.5 566.5,322.7 567.0,324.0 567.5,324.2 568.0,326.3 568.5,327.4 569.0,327.8 569.5,328.1 570.0,329.7 570.5,329.9 571.0,331.6 571.5,333.1 572.0,334.4 572.5,334.4 573.0,337.4 573.5,338.6 574.0,340.2 574.5,340.7 575.0,342.7 575.5,344.3 576.0,345.5 576.5,346.7 577.0,347.6 577.5,347.2 578.0,347.2 578.5,347.1 579.0,346.4 579.5,347.0 580.0,346.4 580.5,346.7 581.0,346.0 581.5,344.7 582.0,345.1 582.5,345.6 583.0,344.9 583.5,343.9 584.0,343.1 584.5,343.5 585.0,343.6 585.5,342.9 586.0,342.4 586.5,342.0 587.0,341.6 587.5,341.4 588.0,341.0 588.5,341.2 589.0,340.8 589.5,339.7 590.0,339.7 590.5,340.1 591.0,339.6 591.5,338.7 592.0,338.9 592.5,338.7 593.0,338.2 593.5,338.4 594.0,337.8 594.5,338.2 595.0,337.5 595.5,337.5 596.0,337.8 596.5,337.3 597.0,336.3 597.5,336.2 598.0,336.2 598.5,336.5 599.0,335.6 599.5,335.6 600.0,335.6 600.5,334.4 601.0,334.7 601.5,334.2 602.0,333.5 602.5,333.9 603.0,333.3 603.5,332.3 604.0,333.0 604.5,332.0 605.0,331.6 605.5,330.7 606.0,330.3 606.5,331.4 607.0,331.1 607.5,330.3 608.0,330.8 608.5,330.3 609.0,329.5 609.5,330.1 610.0,329.8 610.5,329.6 611.0,329.7 611.5,328.7 612.0,328.3 612.5,328.8 613.0,328.9 613.5,329.1 614.0,329.0 614.5,327.9 615.0,327.4 615.5,328.8 616.0,329.0 616.5,328.8 617.0,328.9 617.5,329.0 618.0,328.3 618.5,328.5 619.0,329.0 619.5,329.0 620.0,329.0 620.5,327.5 621.0,329.0 621.5,329.1 622.0,328.5 622.5,328.9 623.0,328.8 623.5,328.8 624.0,329.0 624.5,328.8 625.0,329.0 625.5,327.7 626.0,326.6 626.5,327.2 627.0,328.1 627.5,328.6 628.0,327.3 628.5,327.5 629.0,327.3 629.5,326.2 630.0,327.8 630.5,327.4 631.0,327.8 631.5,327.3 632.0,327.6 632.5,325.9 633.0,326.8 633.5,326.5 634.0,327.2 634.5,326.4 635.0,327.3 635.5,326.6 636.0,327.0 636.5,326.5 637.0,326.4 637.5,326.3 638.0,326.3 638.5,327.1 639.0,326.6 639.5,326.6 640.0,327.3 640.5,327.1 641.0,327.2 641.5,326.5 642.0,327.4 642.5,327.6 643.0,327.5 643.5,327.5 644.0,327.4 644.5,327.0 645.0,327.3 645.5,327.2 646.0,326.8 646.5,326.9 647.0,327.0 647.5,325.4 648.0,326.4 648.5,326.5 649.0,325.8 649.5,326.2 650.0,326.1 650.5,325.8 651.0,325.8 651.5,325.3 652.0,324.2 652.5,324.0 653.0,324.0 653.5,324.7 654.0,324.3 654.5,324.4 655.0,324.1 655.5,323.9 656.0,323.4 656.5,324.0 657.0,322.1 657.5,323.3 658.0,323.8 658.5,323.7 659.0,323.6 659.5,323.8 660.0,322.9 660.5,323.5 661.0,323.5 661.5,323.6 662.0,323.7 662.5,322.8 663.0,323.5 663.5,324.2 664.0,324.2 664.5,324.3 665.0,324.4 665.5,323.7 666.0,324.7 666.5,324.7 667.0,324.7 667.5,324.6 668.0,323.7 668.5,324.5 669.0,324.3 669.5,324.6 670.0,324.3 670.5,324.8 671.0,324.8 671.5,324.7 672.0,324.8 672.5,324.2 673.0,324.6 673.5,324.1 674.0,324.4 674.5,324.2 675.0,324.5 675.5,323.8 676.0,324.4 676.5,324.0 677.0,324.4 677.5,323.8 678.0,323.9 678.5,324.3 679.0,324.0 679.5,323.8 680.0,324.3 680.5,323.5 681.0,323.4 681.5,324.3 682.0,324.2 682.5,324.4 683.0,323.9 683.5,324.5 684.0,324.6 684.5,324.2 685.0,325.0 685.5,322.9 686.0,325.0 686.5,325.1 687.0,324.5 687.5,325.0 688.0,323.8 688.5,324.7 689.0,324.8 689.5,325.1 690.0,324.9 690.5,325.3 691.0,325.5 691.5,325.5 692.0,325.5 692.5,325.5 693.0,325.5 693.5,325.6 694.0,325.5 694.5,325.4 695.0,325.2 695.5,324.9 696.0,323.9 696.5,324.9 697.0,323.7 697.5,324.4 698.0,324.2 698.5,324.4 699.0,324.2 699.5,324.0 700.0,322.8 700.5,323.0 701.0,323.0 701.5,322.4 702.0,323.0 702.5,323.1 703.0,322.5 703.5,322.8 704.0,322.3 704.5,321.9 705.0,322.6 705.5,322.4 706.0,321.2 706.5,322.4 707.0,321.9 707.5,321.5 708.0,321.8 708.5,321.2 709.0,322.0 709.5,321.0 710.0,322.0 710.5,322.1 711.0,321.8 711.5,321.7 712.0,321.4 712.5,321.1 713.0,322.0 713.5,321.4 714.0,320.3 714.5,321.9 715.0,321.5 715.5,321.7 716.0,321.8 716.5,321.6 717.0,321.2 717.5,321.4 718.0,321.2 718.5,320.1 719.0,320.6 719.5,320.0 720.0,320.7 720.5,320.2 721.0,320.3 721.5,319.6 722.0,319.4 722.5,319.8 723.0,319.1 723.5,318.0 724.0,319.3 724.5,319.0 725.0,318.9 725.5,318.4 726.0,317.4 726.5,318.9 727.0,318.8 727.5,317.9 728.0,318.9 728.5,318.0 729.0,318.8 729.5,318.6 730.0,318.6 730.5,318.6 731.0,318.5 731.5,318.4 732.0,318.7 732.5,318.9 733.0,318.7 733.5,319.0 734.0,318.4 734.5,318.9 735.0,318.6 735.5,318.8 736.0,318.7 736.5,318.9 737.0,319.4 737.5,318.0 738.0,319.0 738.5,318.1 739.0,318.2 739.5,319.0 740.0,319.3 740.5,318.9 741.0,318.6 741.5,319.1 742.0,318.2 742.5,318.3 743.0,318.3 743.5,317.6 744.0,318.2 744.5,318.1 745.0,318.1 745.5,317.6 746.0,317.3 746.5,317.3 747.0,317.4 747.5,316.4 748.0,316.8 748.5,316.1 749.0,315.6 749.5,316.8 750.0,316.7 750.5,315.8 751.0,315.8 751.5,316.7 752.0,316.5 752.5,316.5 753.0,316.7 753.5,316.6 754.0,317.2 754.5,317.3 755.0,317.2 755.5,316.2 756.0,317.2 756.5,317.7 757.0,318.0 757.5,317.8 758.0,317.9 758.5,317.9 759.0,317.8 759.5,317.9 760.0,318.6 760.5,318.4 761.0,318.0 761.5,317.6 762.0,318.6 762.5,318.1 763.0,317.2 763.5,318.6 764.0,318.5 764.5,318.3 765.0,317.3 765.5,317.9 766.0,318.3 766.5,317.8 767.0,318.2 767.5,318.2 768.0,317.4 768.5,317.1 769.0,318.0 769.5,316.8 770.0,317.5 770.5,317.7 771.0,317.2 771.5,316.0 772.0,317.7 772.5,317.0 773.0,317.5 773.5,316.5 774.0,317.7 774.5,317.9 775.0,317.4 775.5,317.5 776.0,318.1 776.5,318.1 777.0,317.3 777.5,317.9 778.0,318.7 778.5,318.3 779.0,318.5 779.5,319.2 780.0,319.4 780.5,319.1 781.0,318.5 781.5,320.0 782.0,320.2 782.5,319.7 783.0,320.2 783.5,320.8 784.0,320.7 784.5,320.6 785.0,320.0 785.5,320.9 786.0,321.1 786.5,321.6 787.0,321.4 787.5,321.6 788.0,321.8 788.5,321.6 789.0,320.7 789.5,321.6 790.0,321.1 790.5,322.2 791.0,322.4 791.5,322.7 792.0,322.0 792.5,322.5 793.0,323.1 793.5,323.3 794.0,323.2 794.5,323.8 795.0,322.4 795.5,324.7 796.0,324.3 796.5,324.7 797.0,325.4 797.5,326.0 798.0,326.2 798.5,325.5 799.0,326.7 799.5,327.1 800.0,326.8 800.5,327.6 801.0,327.1 801.5,328.4 802.0,327.4 802.5,327.3 803.0,328.3 803.5,328.8 804.0,328.2 804.5,329.2 805.0,328.8 805.5,329.1 806.0,330.0 806.5,329.3 807.0,329.5 807.5,330.1 808.0,329.8 808.5,330.3 809.0,330.1 809.5,329.5 810.0,329.8 810.5,329.7 811.0,329.8 811.5,329.5 812.0,329.8 812.5,330.3 813.0,330.4 813.5,329.7 814.0,329.3 814.5,329.6 815.0,330.3 815.5,329.4 816.0,329.6 816.5,329.6 817.0,329.6 817.5,329.8 818.0,329.8 818.5,329.0 819.0,329.6 819.5,329.4 820.0,329.1 820.5,330.1 821.0,330.7 821.5,331.1 822.0,331.4 822.5,331.5 823.0,332.6 823.5,333.0 824.0,333.1 824.5,333.7 825.0,334.1 825.5,335.0 826.0,335.7 826.5,336.3 827.0,336.8 827.5,336.7 828.0,337.6 828.5,338.5 829.0,338.5 829.5,338.6 830.0,340.1 830.5,339.6 831.0,340.2 831.5,340.0 832.0,339.4 832.5,340.2 833.0,339.4 833.5,339.5 834.0,340.0 834.5,339.1 835.0,339.6 835.5,339.7 836.0,338.4 836.5,338.9 837.0,339.3 837.5,338.6 838.0,339.0 838.5,339.5 839.0,339.4 839.5,338.3 840.0,339.0 840.5,337.2 841.0,338.4 841.5,338.7 842.0,338.7 842.5,339.0 843.0,339.1 843.5,338.9 844.0,339.2 844.5,338.8 845.0,338.5 845.5,339.3 846.0,339.6 846.5,339.2 847.0,339.5 847.5,338.7 848.0,339.9 848.5,340.0 849.0,340.1 849.5,339.9 850.0,339.8 850.5,340.4 851.0,340.3 851.5,339.5 852.0,340.1 852.5,339.6 853.0,339.9 853.5,339.6 854.0,339.4 854.5,339.7 855.0,339.0 855.5,338.9 856.0,339.0 856.5,338.9 857.0,338.1 857.5,338.4 858.0,338.2 858.5,337.7 859.0,337.0 859.5,337.1 860.0,336.9 860.5,336.8 861.0,336.6 861.5,336.4 862.0,336.4 862.5,336.2 863.0,335.8 863.5,335.4 864.0,335.1 864.5,334.1 865.0,335.0 865.5,334.6 866.0,333.2 866.5,333.4 867.0,333.6 867.5,333.1 868.0,333.5 868.5,332.7 869.0,333.0 869.5,332.8 870.0,332.6 870.5,333.0 871.0,332.9 871.5,333.1 872.0,333.4 872.5,333.5 873.0,333.4 873.5,334.0 874.0,334.1 874.5,333.1 875.0,334.5 875.5,334.1 876.0,334.7 876.5,334.6 877.0,334.7 877.5,334.5 878.0,335.1 878.5,334.8 879.0,335.0 879.5,334.5 880.0,335.3 880.5,334.6 881.0,335.2 881.5,334.8 882.0,334.9 882.5,335.3 883.0,333.5 883.5,334.7 884.0,334.6 884.5,335.1 885.0,334.7 885.5,334.4 886.0,334.5 886.5,334.8 887.0,334.4 887.5,334.7 888.0,334.8 888.5,334.7 889.0,334.8 889.5,334.1 890.0,334.0 890.5,335.0 891.0,333.9 891.5,334.5 892.0,334.8 892.5,334.6 893.0,335.3 893.5,335.3 894.0,335.7 894.5,335.2 895.0,335.6 895.5,335.9 896.0,336.2 896.5,336.3 897.0,336.6 897.5,336.9 898.0,337.1 898.5,336.3 899.0,337.2 899.5,337.4 900.0,337.6 900.5,337.5 901.0,336.7 901.5,336.9 902.0,337.1 902.5,337.0 903.0,336.8 903.5,336.6 904.0,335.8 904.5,336.0 905.0,334.7 905.5,335.7 906.0,334.4 906.5,335.0 907.0,334.5 907.5,334.5 908.0,334.1 908.5,333.9 909.0,333.8 909.5,333.4 910.0,333.2 910.5,332.2 911.0,332.6 911.5,332.5 912.0,331.7 912.5,332.0 913.0,331.3 913.5,331.8 914.0,331.1 914.5,330.4 915.0,330.4 915.5,330.7 916.0,330.8 916.5,330.0 917.0,330.9 917.5,330.1 918.0,330.2 918.5,329.6 919.0,330.3 919.5,329.8 920.0,329.8 920.5,329.9 921.0,329.1 921.5,330.2 922.0,329.9 922.5,329.7 923.0,329.4 923.5,329.3 924.0,328.9 924.5,328.4 925.0,328.4 925.5,328.7 926.0,328.5 926.5,327.4 927.0,328.0 927.5,327.8 928.0,326.9 928.5,327.0 929.0,326.4 929.5,326.1 930.0,326.4 930.5,325.8 931.0,325.3 931.5,325.5 932.0,324.2 932.5,323.5 933.0,323.9 933.5,323.3 934.0,323.7 934.5,323.2 935.0,323.2 935.5,322.4 936.0,322.5 936.5,322.2 937.0,322.3 937.5,322.1 938.0,321.9 938.5,321.1 939.0,320.8 939.5,321.2 940.0,320.9 940.5,320.4 941.0,320.2 941.5,321.0 942.0,321.3 942.5,321.2 943.0,321.3 943.5,320.7 944.0,319.4 944.5,320.7 945.0,321.1 945.5,320.4 946.0,321.2 946.5,320.5 947.0,321.4 947.5,321.1 948.0,321.0 948.5,320.2 949.0,321.3 949.5,320.3 950.0,320.7 950.5,320.8 951.0,320.6 951.5,320.9 952.0,320.7 952.5,320.7 953.0,319.9 953.5,319.4 954.0,319.8 954.5,320.1 955.0,320.0 955.5,319.7 956.0,318.5 956.5,319.0 957.0,318.9 957.5,319.2 958.0,319.4 958.5,318.6 959.0,319.2 959.5,319.3 960.0,319.4 960.5,319.6 961.0,319.4 961.5,319.6 962.0,320.1 962.5,320.2 963.0,320.4 963.5,319.5 964.0,320.8 964.5,321.0 965.0,320.8 965.5,320.8 966.0,321.0 966.5,320.7 967.0,321.4 967.5,321.9 968.0,321.7 968.5,321.8 969.0,322.8 969.5,321.9 970.0,322.9 970.5,322.1 971.0,322.7 971.5,322.5 972.0,323.2 972.5,322.8 973.0,323.0 973.5,323.4 974.0,323.7 974.5,323.6 975.0,323.0 975.5,322.3 976.0,323.6 976.5,322.8 977.0,323.3 977.5,323.2 978.0,322.8 978.5,322.9 979.0,323.2 979.5,322.7 980.0,322.8 980.5,322.9 981.0,323.3 981.5,323.2 982.0,323.0 982.5,323.2 983.0,322.5 983.5,321.1 984.0,322.4 984.5,323.3 985.0,323.5 985.5,323.1 986.0,323.9 986.5,323.6 987.0,324.4 987.5,323.9 988.0,323.4 988.5,325.0 989.0,325.1 989.5,324.9 990.0,325.5 990.5,325.8 991.0,325.9 991.5,325.6 992.0,325.7 992.5,326.4 993.0,326.8 993.5,326.4 994.0,327.1 994.5,327.2 995.0,327.1 995.5,326.6 996.0,327.6 996.5,327.6 997.0,327.0 997.5,327.3 998.0,327.5 998.5,326.9 999.0,328.1 999.5,328.2 1000.0,328.2 1000.5,327.9 1001.0,327.1 1001.5,327.4 1002.0,327.8 1002.5,328.6 1003.0,328.1 1003.5,328.3 1004.0,328.4 1004.5,328.5 1005.0,328.3 1005.5,328.6 1006.0,328.2 1006.5,328.9 1007.0,329.6 1007.5,329.2 1008.0,328.6 1008.5,328.4 1009.0,330.2 1009.5,330.1 1010.0,329.5 1010.5,330.6 1011.0,331.0 1011.5,330.8 1012.0,331.0 1012.5,331.5 1013.0,331.4 1013.5,331.8 1014.0,332.3 1014.5,332.2 1015.0,331.7 1015.5,331.9 1016.0,332.5 1016.5,332.8 1017.0,333.0 1017.5,333.4 1018.0,332.8 1018.5,333.6 1019.0,333.5 1019.5,334.3 1020.0,334.4 1020.5,334.3 1021.0,333.9 1021.5,333.9 1022.0,334.4 1022.5,334.7 1023.0,333.8 1023.5,334.5 1024.0,335.0 1024.5,334.6 1025.0,334.9 1025.5,334.5 1026.0,335.3 1026.5,334.8 1027.0,333.5 1027.5,334.7 1028.0,334.6 1028.5,335.6 1029.0,335.7 1029.5,335.1 1030.0,336.1 1030.5,335.4 1031.0,334.9 1031.5,336.5 1032.0,336.6 1032.5,336.8 1033.0,336.2 1033.5,337.0 1034.0,337.4 1034.5,336.7 1035.0,337.3 1035.5,337.7 1036.0,337.6 1036.5,338.4 1037.0,338.5 1037.5,338.9 1038.0,338.3 1038.5,339.2 1039.0,339.2 1039.5,339.2 1040.0,339.7 1040.5,338.5 1041.0,340.0 1041.5,339.2 1042.0,338.9 1042.5,339.7 1043.0,340.3 1043.5,339.4 1044.0,339.9 1044.5,340.4 1045.0,339.4 1045.5,340.2 1046.0,340.1 1046.5,339.4 1047.0,340.3 1047.5,339.5 1048.0,340.1 1048.5,339.9 1049.0,339.8 1049.5,340.0 1050.0,339.5 1050.5,340.0 1051.0,339.5 1051.5,339.9 1052.0,339.7 1052.5,339.8 1053.0,339.9 1053.5,340.2 1054.0,339.6 1054.0,345.2 1053.5,343.3 1053.0,343.9 1052.5,343.3 1052.0,343.8 1051.5,343.4 1051.0,343.6 1050.5,343.7 1050.0,343.3 1049.5,343.5 1049.0,343.3 1048.5,344.0 1048.0,343.8 1047.5,343.3 1047.0,343.3 1046.5,343.8 1046.0,343.8 1045.5,344.2 1045.0,343.3 1044.5,344.2 1044.0,343.6 1043.5,343.9 1043.0,343.3 1042.5,343.3 1042.0,343.7 1041.5,343.3 1041.0,343.2 1040.5,343.6 1040.0,344.0 1039.5,342.6 1039.0,342.3 1038.5,342.3 1038.0,342.8 1037.5,342.8 1037.0,342.2 1036.5,342.1 1036.0,341.4 1035.5,342.0 1035.0,341.0 1034.5,341.4 1034.0,340.5 1033.5,340.2 1033.0,340.5 1032.5,340.4 1032.0,340.6 1031.5,339.8 1031.0,339.5 1030.5,339.7 1030.0,339.5 1029.5,338.9 1029.0,339.0 1028.5,339.3 1028.0,339.6 1027.5,338.5 1027.0,339.2 1026.5,339.2 1026.0,338.3 1025.5,338.5 1025.0,338.6 1024.5,338.9 1024.0,337.9 1023.5,338.9 1023.0,338.3 1022.5,338.0 1022.0,338.4 1021.5,338.4 1021.0,338.2 1020.5,337.4 1020.0,337.4 1019.5,337.9 1019.0,337.3 1018.5,337.1 1018.0,337.1 1017.5,337.7 1017.0,336.9 1016.5,337.8 1016.0,336.6 1015.5,336.2 1015.0,337.1 1014.5,336.0 1014.0,335.4 1013.5,335.2 1013.0,334.9 1012.5,335.6 1012.0,334.5 1011.5,334.1 1011.0,333.8 1010.5,334.0 1010.0,333.5 1009.5,334.2 1009.0,334.5 1008.5,333.5 1008.0,333.3 1007.5,332.7 1007.0,333.2 1006.5,332.6 1006.0,334.2 1005.5,333.4 1005.0,332.4 1004.5,332.9 1004.0,332.4 1003.5,332.1 1003.0,332.0 1002.5,332.0 1002.0,331.8 1001.5,331.9 1001.0,331.8 1000.5,332.5 1000.0,331.5 999.5,331.2 999.0,331.3 998.5,331.3 998.0,331.3 997.5,330.9 997.0,331.3 996.5,332.0 996.0,331.0 995.5,331.8 995.0,330.6 994.5,330.4 994.0,330.4 993.5,330.0 993.0,329.9 992.5,330.3 992.0,330.4 991.5,330.0 991.0,329.6 990.5,329.1 990.0,329.3 989.5,329.0 989.0,328.3 988.5,328.4 988.0,327.8 987.5,328.6 987.0,328.6 986.5,327.4 986.0,327.7 985.5,327.2 985.0,326.8 984.5,327.2 984.0,326.3 983.5,326.2 983.0,327.6 982.5,326.9 982.0,326.9 981.5,327.1 981.0,326.1 980.5,326.2 980.0,326.9 979.5,326.3 979.0,326.7 978.5,326.4 978.0,326.9 977.5,326.4 977.0,328.4 976.5,327.2 976.0,326.9 975.5,326.8 975.0,327.5 974.5,327.8 974.0,326.7 973.5,326.8 973.0,326.9 972.5,326.9 972.0,326.6 971.5,326.7 971.0,326.7 970.5,327.3 970.0,326.3 969.5,326.7 969.0,326.3 968.5,325.6 968.0,325.5 967.5,325.4 967.0,326.0 966.5,325.3 966.0,324.8 965.5,324.5 965.0,324.1 964.5,324.3 964.0,323.9 963.5,323.7 963.0,323.7 962.5,324.1 962.0,323.5 961.5,322.9 961.0,323.2 960.5,323.1 960.0,322.7 959.5,323.2 959.0,322.7 958.5,323.7 958.0,322.8 957.5,322.6 957.0,323.1 956.5,323.6 956.0,323.2 955.5,323.9 955.0,323.4 954.5,323.4 954.0,323.4 953.5,323.4 953.0,324.3 952.5,323.8 952.0,324.2 951.5,324.6 951.0,324.5 950.5,325.1 950.0,324.0 949.5,324.5 949.0,324.5 948.5,325.0 948.0,325.5 947.5,324.9 947.0,324.6 946.5,324.9 946.0,324.4 945.5,324.5 945.0,324.7 944.5,325.3 944.0,324.5 943.5,324.3 943.0,324.9 942.5,324.2 942.0,325.2 941.5,324.3 941.0,324.2 940.5,325.0 940.0,324.7 939.5,324.7 939.0,325.9 938.5,325.1 938.0,325.5 937.5,325.3 937.0,325.5 936.5,326.1 936.0,327.0 935.5,326.7 935.0,326.5 934.5,327.4 934.0,326.9 933.5,327.4 933.0,328.1 932.5,328.0 932.0,328.5 931.5,328.7 931.0,329.5 930.5,329.7 930.0,329.8 929.5,329.9 929.0,330.3 928.5,330.6 928.0,330.7 927.5,332.8 927.0,331.2 926.5,332.2 926.0,331.9 925.5,332.6 925.0,332.9 924.5,333.6 924.0,332.6 923.5,332.7 923.0,333.5 922.5,333.6 922.0,333.3 921.5,334.0 921.0,333.4 920.5,334.6 920.0,333.4 919.5,334.7 919.0,333.7 918.5,334.1 918.0,333.9 917.5,334.2 917.0,334.4 916.5,334.9 916.0,334.9 915.5,334.5 915.0,334.6 914.5,334.7 914.0,335.7 913.5,335.4 913.0,335.6 912.5,335.4 912.0,335.6 911.5,336.3 911.0,336.2 910.5,336.7 910.0,336.7 909.5,337.4 909.0,336.8 908.5,337.4 908.0,337.3 907.5,339.1 907.0,338.2 906.5,338.6 906.0,338.8 905.5,338.7 905.0,339.4 904.5,339.8 904.0,340.6 903.5,339.5 903.0,340.7 902.5,340.4 902.0,340.3 901.5,340.4 901.0,341.1 900.5,341.6 900.0,341.2 899.5,341.2 899.0,341.1 898.5,341.1 898.0,341.6 897.5,339.9 897.0,340.6 896.5,339.7 896.0,339.9 895.5,339.3 895.0,339.8 894.5,339.4 894.0,338.8 893.5,339.0 893.0,339.1 892.5,339.2 892.0,338.9 891.5,338.6 891.0,339.3 890.5,337.9 890.0,338.3 889.5,337.9 889.0,337.8 888.5,338.4 888.0,338.0 887.5,337.9 887.0,338.2 886.5,338.4 886.0,338.4 885.5,338.1 885.0,338.7 884.5,339.1 884.0,338.7 883.5,338.7 883.0,338.3 882.5,338.2 882.0,339.0 881.5,339.4 881.0,338.9 880.5,338.3 880.0,338.3 879.5,339.0 879.0,338.5 878.5,338.5 878.0,338.3 877.5,337.9 877.0,337.8 876.5,337.9 876.0,338.1 875.5,338.3 875.0,337.4 874.5,337.5 874.0,337.5 873.5,336.9 873.0,337.9 872.5,338.0 872.0,337.7 871.5,336.5 871.0,336.4 870.5,336.0 870.0,335.8 869.5,336.9 869.0,337.4 868.5,338.4 868.0,337.2 867.5,336.9 867.0,337.5 866.5,337.6 866.0,337.5 865.5,337.9 865.0,338.0 864.5,338.3 864.0,339.4 863.5,339.1 863.0,339.7 862.5,339.3 862.0,339.4 861.5,339.9 861.0,340.9 860.5,340.4 860.0,341.0 859.5,341.9 859.0,341.6 858.5,341.9 858.0,342.5 857.5,342.1 857.0,342.5 856.5,342.5 856.0,342.8 855.5,342.5 855.0,342.7 854.5,343.2 854.0,343.0 853.5,343.0 853.0,344.5 852.5,343.6 852.0,343.3 851.5,343.5 851.0,345.4 850.5,344.0 850.0,343.5 849.5,344.2 849.0,343.5 848.5,343.9 848.0,343.2 847.5,342.9 847.0,343.8 846.5,343.2 846.0,342.8 845.5,342.7 845.0,342.4 844.5,342.3 844.0,342.2 843.5,342.4 843.0,342.2 842.5,342.1 842.0,342.4 841.5,342.2 841.0,344.1 840.5,342.6 840.0,342.4 839.5,342.3 839.0,343.4 838.5,343.0 838.0,342.7 837.5,342.9 837.0,343.4 836.5,343.9 836.0,343.1 835.5,343.3 835.0,344.3 834.5,344.6 834.0,344.0 833.5,343.2 833.0,343.3 832.5,344.5 832.0,343.4 831.5,343.6 831.0,343.8 830.5,344.1 830.0,343.3 829.5,343.1 829.0,343.4 828.5,342.9 828.0,341.6 827.5,340.7 827.0,340.0 826.5,340.2 826.0,340.1 825.5,338.9 825.0,338.2 824.5,337.3 824.0,336.9 823.5,336.8 823.0,336.1 822.5,336.0 822.0,334.7 821.5,335.6 821.0,334.3 820.5,333.7 820.0,332.7 819.5,333.1 819.0,333.3 818.5,333.9 818.0,333.3 817.5,333.2 817.0,333.1 816.5,333.0 816.0,333.4 815.5,333.2 815.0,333.4 814.5,333.6 814.0,333.7 813.5,334.9 813.0,333.7 812.5,334.1 812.0,335.4 811.5,333.9 811.0,333.9 810.5,333.9 810.0,335.2 809.5,333.8 809.0,333.6 808.5,333.6 808.0,333.5 807.5,333.8 807.0,333.2 806.5,333.3 806.0,333.9 805.5,332.7 805.0,332.8 804.5,332.6 804.0,333.8 803.5,332.8 803.0,332.1 802.5,331.8 802.0,331.7 801.5,332.4 801.0,331.8 800.5,331.7 800.0,331.0 799.5,331.7 799.0,331.0 798.5,330.1 798.0,329.5 797.5,330.2 797.0,329.3 796.5,328.7 796.0,328.2 795.5,328.2 795.0,327.6 794.5,327.4 794.0,327.9 793.5,327.3 793.0,327.0 792.5,326.2 792.0,326.1 791.5,326.0 791.0,326.2 790.5,325.5 790.0,325.2 789.5,325.7 789.0,325.3 788.5,325.8 788.0,324.9 787.5,324.9 787.0,326.1 786.5,326.0 786.0,324.4 785.5,325.1 785.0,324.2 784.5,324.0 784.0,324.1 783.5,323.9 783.0,323.5 782.5,323.4 782.0,323.3 781.5,323.6 781.0,323.0 780.5,323.1 780.0,322.8 779.5,323.1 779.0,322.1 778.5,321.9 778.0,322.2 777.5,322.0 777.0,322.1 776.5,321.3 776.0,321.2 775.5,321.6 775.0,322.0 774.5,321.1 774.0,321.4 773.5,320.7 773.0,322.2 772.5,320.9 772.0,321.1 771.5,321.1 771.0,321.2 770.5,322.4 770.0,321.4 769.5,320.8 769.0,321.5 768.5,321.5 768.0,321.5 767.5,321.6 767.0,321.4 766.5,321.6 766.0,321.7 765.5,321.7 765.0,321.7 764.5,321.6 764.0,321.5 763.5,321.7 763.0,322.5 762.5,321.6 762.0,321.7 761.5,321.8 761.0,321.6 760.5,322.1 760.0,321.7 759.5,321.9 759.0,321.6 758.5,322.5 758.0,321.8 757.5,321.2 757.0,321.3 756.5,320.9 756.0,320.9 755.5,321.0 755.0,321.5 754.5,321.1 754.0,320.9 753.5,321.4 753.0,320.9 752.5,320.5 752.0,320.8 751.5,320.2 751.0,319.8 750.5,321.0 750.0,319.9 749.5,320.7 749.0,320.1 748.5,320.6 748.0,320.5 747.5,321.4 747.0,320.4 746.5,321.0 746.0,321.5 745.5,322.1 745.0,321.4 744.5,321.3 744.0,321.6 743.5,322.3 743.0,321.6 742.5,322.4 742.0,322.5 741.5,322.2 741.0,322.0 740.5,322.3 740.0,322.3 739.5,322.4 739.0,323.9 738.5,322.9 738.0,322.6 737.5,322.7 737.0,323.0 736.5,322.4 736.0,323.0 735.5,323.4 735.0,322.4 734.5,322.3 734.0,322.5 733.5,322.0 733.0,322.1 732.5,322.0 732.0,322.7 731.5,322.0 731.0,322.1 730.5,321.8 730.0,322.0 729.5,321.8 729.0,322.6 728.5,321.9 728.0,321.9 727.5,322.8 727.0,322.0 726.5,322.8 726.0,322.6 725.5,322.5 725.0,322.5 724.5,323.0 724.0,322.4 723.5,322.5 723.0,322.8 722.5,323.1 722.0,323.7 721.5,323.3 721.0,323.5 720.5,323.7 720.0,324.0 719.5,324.6 719.0,324.2 718.5,324.6 718.0,325.2 717.5,324.8 717.0,325.0 716.5,324.7 716.0,325.3 715.5,325.4 715.0,325.3 714.5,325.1 714.0,325.3 713.5,325.5 713.0,326.2 712.5,325.6 712.0,325.2 711.5,325.4 711.0,326.1 710.5,325.3 710.0,325.4 709.5,325.6 709.0,326.3 708.5,325.3 708.0,325.5 707.5,325.9 707.0,326.0 706.5,325.9 706.0,325.5 705.5,325.8 705.0,326.7 704.5,326.4 704.0,325.9 703.5,325.9 703.0,326.1 702.5,326.2 702.0,327.8 701.5,326.3 701.0,326.7 700.5,326.6 700.0,326.9 699.5,327.8 699.0,327.9 698.5,327.5 698.0,328.2 697.5,328.5 697.0,329.4 696.5,328.2 696.0,328.1 695.5,328.6 695.0,329.2 694.5,328.6 694.0,328.6 693.5,329.3 693.0,329.4 692.5,329.6 692.0,328.8 691.5,328.9 691.0,328.9 690.5,329.1 690.0,329.6 689.5,329.3 689.0,329.1 688.5,329.8 688.0,329.0 687.5,328.6 687.0,329.0 686.5,328.4 686.0,328.2 685.5,328.0 685.0,328.4 684.5,328.5 684.0,327.7 683.5,328.0 683.0,327.6 682.5,327.8 682.0,327.5 681.5,327.3 681.0,327.4 680.5,328.1 680.0,327.3 679.5,327.3 679.0,327.7 678.5,327.4 678.0,328.2 677.5,327.7 677.0,327.4 676.5,327.7 676.0,328.3 675.5,327.9 675.0,327.4 674.5,329.1 674.0,328.1 673.5,329.2 673.0,328.6 672.5,328.8 672.0,328.8 671.5,328.3 671.0,328.4 670.5,328.7 670.0,328.1 669.5,327.9 669.0,328.1 668.5,328.0 668.0,328.5 667.5,327.8 667.0,328.2 666.5,327.7 666.0,327.6 665.5,328.4 665.0,327.9 664.5,327.4 664.0,328.1 663.5,328.0 663.0,327.5 662.5,327.2 662.0,327.6 661.5,327.4 661.0,326.9 660.5,327.1 660.0,327.3 659.5,327.1 659.0,327.2 658.5,328.1 658.0,327.9 657.5,327.3 657.0,327.3 656.5,327.0 656.0,327.3 655.5,327.3 655.0,327.6 654.5,328.6 654.0,328.6 653.5,328.2 653.0,328.9 652.5,328.1 652.0,328.7 651.5,329.0 651.0,328.8 650.5,328.8 650.0,330.1 649.5,330.0 649.0,330.8 648.5,330.1 648.0,330.3 647.5,330.6 647.0,330.2 646.5,331.1 646.0,330.1 645.5,330.3 645.0,330.3 644.5,330.5 644.0,330.7 643.5,330.7 643.0,331.6 642.5,331.7 642.0,330.8 641.5,330.5 641.0,330.8 640.5,330.4 640.0,330.7 639.5,331.5 639.0,330.9 638.5,330.8 638.0,331.1 637.5,331.1 637.0,331.3 636.5,331.1 636.0,330.3 635.5,331.5 635.0,330.2 634.5,330.9 634.0,331.0 633.5,330.9 633.0,330.8 632.5,331.1 632.0,330.6 631.5,331.3 631.0,330.9 630.5,331.7 630.0,331.5 629.5,331.4 629.0,331.1 628.5,331.9 628.0,331.9 627.5,331.6 627.0,331.7 626.5,331.8 626.0,332.1 625.5,332.3 625.0,332.3 624.5,332.7 624.0,332.1 623.5,332.0 623.0,332.3 622.5,332.8 622.0,333.2 621.5,333.4 621.0,334.1 620.5,332.1 620.0,333.2 619.5,331.9 619.0,332.7 618.5,332.1 618.0,332.2 617.5,332.2 617.0,332.9 616.5,332.5 616.0,333.2 615.5,332.6 615.0,332.9 614.5,332.1 614.0,332.8 613.5,332.2 613.0,332.5 612.5,332.4 612.0,333.4 611.5,333.1 611.0,332.6 610.5,334.0 610.0,334.6 609.5,334.0 609.0,333.8 608.5,333.8 608.0,335.7 607.5,334.4 607.0,335.1 606.5,335.0 606.0,335.0 605.5,335.1 605.0,335.6 604.5,336.0 604.0,336.7 603.5,337.5 603.0,337.2 602.5,336.9 602.0,337.5 601.5,338.1 601.0,338.0 600.5,338.5 600.0,338.8 599.5,339.2 599.0,339.2 598.5,340.1 598.0,340.4 597.5,341.2 597.0,341.3 596.5,341.3 596.0,340.7 595.5,342.0 595.0,341.9 594.5,343.0 594.0,341.8 593.5,342.1 593.0,343.5 592.5,342.2 592.0,342.8 591.5,343.3 591.0,342.9 590.5,343.6 590.0,343.3 589.5,344.5 589.0,344.6 588.5,345.3 588.0,344.7 587.5,345.3 587.0,346.2 586.5,345.5 586.0,346.8 585.5,346.3 585.0,347.0 584.5,348.9 584.0,347.9 583.5,348.8 583.0,348.8 582.5,348.9 582.0,348.8 581.5,349.0 581.0,349.8 580.5,349.8 580.0,350.0 579.5,351.0 579.0,351.0 578.5,351.0 578.0,351.8 577.5,351.1 577.0,351.7 576.5,350.4 576.0,348.6 575.5,347.9 575.0,346.2 574.5,344.6 574.0,343.7 573.5,342.6 573.0,340.3 572.5,339.3 572.0,338.8 571.5,336.7 571.0,335.7 570.5,334.6 570.0,333.7 569.5,332.9 569.0,332.2 568.5,331.3 568.0,329.7 567.5,328.5 567.0,328.6 566.5,327.0 566.0,325.5 565.5,324.5 565.0,324.1 564.5,324.2 564.0,323.1 563.5,322.1 563.0,321.7 562.5,321.0 562.0,321.4 561.5,320.5 561.0,319.7 560.5,319.4 560.0,319.6 559.5,318.3 559.0,317.9 558.5,317.9 558.0,317.4 557.5,316.7 557.0,316.4 556.5,317.0 556.0,316.6 555.5,315.7 555.0,315.2 554.5,314.6 554.0,313.8 553.5,313.3 553.0,313.2 552.5,312.9 552.0,312.0 551.5,312.0 551.0,311.0 550.5,311.4 550.0,310.7 549.5,309.6 549.0,309.7 548.5,308.8 548.0,308.4 547.5,308.3 547.0,307.6 546.5,306.6 546.0,308.6 545.5,306.1 545.0,305.7 544.5,305.8 544.0,305.7 543.5,305.5 543.0,305.7 542.5,306.0 542.0,305.4 541.5,306.5 541.0,306.1 540.5,305.9 540.0,306.3 539.5,307.3 539.0,306.7 538.5,307.3 538.0,307.5 537.5,308.5 537.0,310.1 536.5,309.0 536.0,309.5 535.5,310.4 535.0,310.1 534.5,311.2 534.0,311.6 533.5,311.3 533.0,313.8 532.5,312.6 532.0,313.4 531.5,313.5 531.0,313.5 530.5,315.0 530.0,315.2 529.5,314.9 529.0,315.0 528.5,316.1 528.0,316.3 527.5,316.4 527.0,316.9 526.5,318.6 526.0,317.7 525.5,318.4 525.0,319.3 524.5,318.9 524.0,319.3 523.5,320.2 523.0,320.0 522.5,320.3 522.0,320.9 521.5,322.0 521.0,321.4 520.5,322.3 520.0,324.1 519.5,322.5 519.0,321.7 518.5,323.1 518.0,320.4 517.5,321.1 517.0,321.1 516.5,319.8 516.0,319.0 515.5,319.3 515.0,319.8 514.5,318.1 514.0,318.0 513.5,317.1 513.0,317.5 512.5,316.9 512.0,316.3 511.5,315.6 511.0,317.0 510.5,316.2 510.0,314.6 509.5,314.4 509.0,315.0 508.5,315.0 508.0,314.3 507.5,313.2 507.0,312.9 506.5,313.6 506.0,312.5 505.5,312.2 505.0,311.8 504.5,311.2 504.0,312.1 503.5,310.9 503.0,310.9 502.5,310.1 502.0,309.2 501.5,309.3 501.0,309.9 500.5,307.9 500.0,307.5 499.5,307.7 499.0,307.9 498.5,307.9 498.0,308.7 497.5,308.8 497.0,308.8 496.5,308.7 496.0,309.1 495.5,309.3 495.0,310.5 494.5,310.1 494.0,310.3 493.5,310.2 493.0,310.5 492.5,311.3 492.0,311.8 491.5,311.3 491.0,311.8 490.5,312.1 490.0,313.7 489.5,312.5 489.0,313.6 488.5,313.1 488.0,312.6 487.5,312.8 487.0,313.2 486.5,313.4 486.0,313.5 485.5,313.2 485.0,312.9 484.5,314.0 484.0,313.2 483.5,313.4 483.0,312.7 482.5,313.0 482.0,313.7 481.5,313.0 481.0,313.9 480.5,312.8 480.0,314.3 479.5,312.5 479.0,312.3 478.5,312.4 478.0,312.3 477.5,312.8 477.0,311.9 476.5,311.8 476.0,311.8 475.5,311.6 475.0,311.9 474.5,311.4 474.0,311.8 473.5,311.1 473.0,310.8 472.5,311.4 472.0,312.4 471.5,310.8 471.0,311.0 470.5,310.8 470.0,311.0 469.5,310.9 469.0,311.3 468.5,311.5 468.0,311.1 467.5,311.3 467.0,311.5 466.5,311.7 466.0,312.1 465.5,311.8 465.0,313.4 464.5,312.1 464.0,312.1 463.5,312.2 463.0,312.3 462.5,312.8 462.0,314.1 461.5,312.8 461.0,313.0 460.5,313.2 460.0,313.1 459.5,312.8 459.0,313.4 458.5,314.2 458.0,313.6 457.5,312.5 457.0,312.5 456.5,312.5 456.0,312.3 455.5,312.3 455.0,313.1 454.5,312.2 454.0,312.4 453.5,312.2 453.0,311.9 452.5,311.5 452.0,311.5 451.5,311.4 451.0,312.2 450.5,311.7 450.0,311.5 449.5,312.2 449.0,311.8 448.5,312.0 448.0,312.1 447.5,312.9 447.0,313.0 446.5,313.7 446.0,313.9 445.5,314.4 445.0,314.4 444.5,315.0 444.0,314.6 443.5,314.4 443.0,313.2 442.5,313.2 442.0,313.0 441.5,312.8 441.0,312.3 440.5,312.2 440.0,311.8 439.5,312.7 439.0,312.1 438.5,312.1 438.0,312.1 437.5,312.0 437.0,313.0 436.5,313.0 436.0,312.3 435.5,312.3 435.0,312.2 434.5,313.5 434.0,313.1 433.5,313.5 433.0,312.4 432.5,313.0 432.0,312.7 431.5,311.9 431.0,312.8 430.5,313.7 430.0,313.1 429.5,312.1 429.0,311.2 428.5,311.2 428.0,311.3 427.5,310.5 427.0,310.4 426.5,310.1 426.0,310.6 425.5,310.1 425.0,309.0 424.5,308.9 424.0,308.5 423.5,308.3 423.0,308.6 422.5,308.5 422.0,308.5 421.5,308.0 421.0,308.7 420.5,308.1 420.0,307.4 419.5,308.0 419.0,309.7 418.5,309.7 418.0,310.2 417.5,311.4 417.0,312.0 416.5,313.3 416.0,313.0 415.5,314.0 415.0,314.8 414.5,315.1 414.0,315.1 413.5,313.4 413.0,312.6 412.5,312.6 412.0,311.8 411.5,311.1 411.0,310.6 410.5,311.1 410.0,309.5 409.5,309.4 409.0,309.0 408.5,309.3 408.0,308.2 407.5,308.0 407.0,307.8 406.5,306.8 406.0,306.6 405.5,306.6 405.0,305.6 404.5,305.6 404.0,305.3 403.5,304.4 403.0,304.3 402.5,305.2 402.0,303.2 401.5,302.8 401.0,302.8 400.5,302.7 400.0,302.7 399.5,303.9 399.0,304.9 398.5,305.6 398.0,306.7 397.5,307.2 397.0,308.4 396.5,309.0 396.0,311.8 395.5,311.2 395.0,313.2 394.5,313.4 394.0,315.3 393.5,315.5 393.0,316.6 392.5,315.6 392.0,314.0 391.5,313.4 391.0,312.2 390.5,310.6 390.0,310.0 389.5,308.5 389.0,307.2 388.5,306.1 388.0,304.3 387.5,303.3 387.0,302.1 386.5,302.0 386.0,303.1 385.5,301.7 385.0,301.3 384.5,301.9 384.0,302.0 383.5,300.7 383.0,300.9 382.5,301.0 382.0,300.4 381.5,299.9 381.0,300.0 380.5,300.0 380.0,299.8 379.5,299.7 379.0,299.9 378.5,300.0 378.0,300.5 377.5,302.0 377.0,301.6 376.5,302.1 376.0,303.5 375.5,303.8 375.0,303.9 374.5,304.6 374.0,305.2 373.5,306.1 373.0,306.7 372.5,307.6 372.0,308.3 371.5,308.4 371.0,308.9 370.5,310.9 370.0,310.6 369.5,309.8 369.0,310.0 368.5,310.5 368.0,308.6 367.5,308.6 367.0,308.6 366.5,307.4 366.0,307.2 365.5,306.9 365.0,305.9 364.5,305.1 364.0,305.0 363.5,304.6 363.0,304.0 362.5,303.7 362.0,302.3 361.5,302.2 361.0,302.3 360.5,301.5 360.0,302.3 359.5,301.9 359.0,301.0 358.5,301.1 358.0,300.8 357.5,300.5 357.0,299.6 356.5,299.6 356.0,299.4 355.5,300.5 355.0,301.3 354.5,301.0 354.0,302.0 353.5,302.8 353.0,303.0 352.5,303.1 352.0,303.8 351.5,305.5 351.0,304.9 350.5,305.7 350.0,306.1 349.5,307.0 349.0,307.4 348.5,309.1 348.0,308.9 347.5,309.0 347.0,308.3 346.5,307.9 346.0,307.6 345.5,307.6 345.0,306.5 344.5,306.3 344.0,306.4 343.5,305.4 343.0,305.4 342.5,305.0 342.0,303.9 341.5,303.4 341.0,304.2 340.5,304.1 340.0,302.7 339.5,302.5 339.0,302.6 338.5,303.6 338.0,302.8 337.5,301.8 337.0,302.0 336.5,302.2 336.0,302.3 335.5,302.0 335.0,301.3 334.5,301.8 334.0,301.6 333.5,301.4 333.0,303.3 332.5,303.0 332.0,303.0 331.5,304.2 331.0,304.2 330.5,305.0 330.0,305.9 329.5,305.5 329.0,306.9 328.5,307.1 328.0,307.2 327.5,308.3 327.0,308.5 326.5,308.1 326.0,307.4 325.5,308.0 325.0,306.0 324.5,305.3 324.0,305.3 323.5,304.5 323.0,305.4 322.5,303.5 322.0,302.2 321.5,301.3 321.0,300.5 320.5,300.1 320.0,299.3 319.5,299.8 319.0,300.3 318.5,299.8 318.0,300.2 317.5,300.8 317.0,301.5 316.5,301.0 316.0,300.8 315.5,301.1 315.0,301.3 314.5,301.0 314.0,301.1 313.5,303.1 313.0,301.5 312.5,301.4 312.0,302.1 311.5,301.1 311.0,301.4 310.5,301.4 310.0,301.3 309.5,301.0 309.0,301.6 308.5,302.1 308.0,302.1 307.5,301.4 307.0,301.3 306.5,302.4 306.0,303.8 305.5,304.6 305.0,306.0 304.5,306.6 304.0,308.0 303.5,308.5 303.0,309.6 302.5,310.7 302.0,311.5 301.5,311.9 301.0,312.0 300.5,310.6 300.0,309.5 299.5,309.4 299.0,309.0 298.5,308.8 298.0,307.4 297.5,307.3 297.0,306.8 296.5,305.9 296.0,305.4 295.5,304.4 295.0,304.7 294.5,303.4 294.0,303.0 293.5,302.4 293.0,301.2 292.5,300.3 292.0,299.8 291.5,299.2 291.0,298.3 290.5,298.8 290.0,299.7 289.5,301.0 289.0,300.4 288.5,300.8 288.0,300.1 287.5,300.7 287.0,301.0 286.5,301.2 286.0,301.4 285.5,301.9 285.0,302.6 284.5,303.4 284.0,303.7 283.5,303.0 283.0,303.2 282.5,303.0 282.0,301.8 281.5,302.3 281.0,301.9 280.5,301.7 280.0,302.5 279.5,300.2 279.0,300.9 278.5,300.1 278.0,299.1 277.5,299.4 277.0,299.9 276.5,299.9 276.0,300.5 275.5,300.6 275.0,300.7 274.5,300.8 274.0,300.8 273.5,301.2 273.0,301.2 272.5,301.4 272.0,301.5 271.5,301.7 271.0,301.6 270.5,301.6 270.0,302.9 269.5,301.0 269.0,301.1 268.5,301.7 268.0,301.0 267.5,300.4 267.0,301.0 266.5,300.1 266.0,299.9 265.5,299.9 265.0,299.9 264.5,300.5 264.0,299.3 263.5,299.9 263.0,302.1 262.5,302.3 262.0,301.9 261.5,302.5 261.0,303.2 260.5,304.0 260.0,305.9 259.5,305.3 259.0,306.2 258.5,306.8 258.0,307.7 257.5,308.5 257.0,309.6 256.5,309.0 256.0,308.6 255.5,308.3 255.0,308.0 254.5,307.7 254.0,308.1 253.5,308.0 253.0,307.0 252.5,306.7 252.0,306.4 251.5,306.2 251.0,306.3 250.5,305.6 250.0,305.3 249.5,305.5 249.0,304.1 248.5,304.5 248.0,303.8 247.5,303.8 247.0,303.0 246.5,303.1 246.0,302.7 245.5,303.3 245.0,302.0 244.5,301.8 244.0,302.8 243.5,302.2 243.0,301.6 242.5,300.7 242.0,300.5 241.5,300.2 241.0,300.6 240.5,300.9 240.0,302.0 239.5,302.5 239.0,303.5 238.5,304.5 238.0,305.8 237.5,305.7 237.0,306.9 236.5,307.7 236.0,309.2 235.5,307.7 235.0,306.9 234.5,306.9 234.0,306.2 233.5,305.2 233.0,305.5 232.5,304.7 232.0,303.7 231.5,302.1 231.0,301.8 230.5,300.4 230.0,299.4 229.5,298.7 229.0,297.7 228.5,296.9 228.0,296.0 227.5,294.5 227.0,294.0 226.5,294.1 226.0,294.1 225.5,293.0 225.0,293.6 224.5,292.6 224.0,292.8 223.5,293.0 223.0,293.7 222.5,291.9 222.0,292.4 221.5,292.0 221.0,292.6 220.5,292.5 220.0,293.1 219.5,292.4 219.0,292.1 218.5,292.4 218.0,292.2 217.5,292.4 217.0,292.6 216.5,293.4 216.0,293.7 215.5,294.2 215.0,294.3 214.5,294.3 214.0,294.7 213.5,295.2 213.0,295.6 212.5,296.1 212.0,296.9 211.5,297.5 211.0,298.8 210.5,301.0 210.0,301.5 209.5,302.4 209.0,303.9 208.5,304.9 208.0,305.8 207.5,307.1 207.0,305.5 206.5,306.2 206.0,304.9 205.5,303.2 205.0,302.7 204.5,302.8 204.0,301.7 203.5,300.9 203.0,300.8 202.5,299.5 202.0,299.0 201.5,298.0 201.0,297.0 200.5,295.9 200.0,295.0 199.5,293.9 199.0,293.6 198.5,292.2 198.0,291.1 197.5,292.2 197.0,291.7 196.5,293.0 196.0,292.6 195.5,293.7 195.0,294.4 194.5,294.0 194.0,295.4 193.5,295.6 193.0,295.8 192.5,296.1 192.0,298.3 191.5,300.2 191.0,303.3 190.5,305.4 190.0,307.2 189.5,309.8 189.0,312.7 188.5,314.7 188.0,316.7 187.5,314.9 187.0,312.8 186.5,311.0 186.0,309.7 185.5,308.5 185.0,306.2 184.5,304.0 184.0,302.0 183.5,300.3 183.0,298.7 182.5,298.0 182.0,297.9 181.5,297.8 181.0,296.7 180.5,296.0 180.0,297.4 179.5,295.5 179.0,295.0 178.5,294.1 178.0,293.3 177.5,294.3 177.0,294.8 176.5,294.1 176.0,295.6 175.5,295.4 175.0,294.5 174.5,294.8 174.0,295.0 173.5,295.1 173.0,295.7 172.5,295.6 172.0,296.2 171.5,295.8 171.0,296.3 170.5,296.5 170.0,298.3 169.5,298.5 169.0,300.3 168.5,301.2 168.0,302.4 167.5,304.3 167.0,305.9 166.5,306.7 166.0,308.2 165.5,309.9 165.0,311.3 164.5,310.0 164.0,307.9 163.5,306.9 163.0,304.7 162.5,304.3 162.0,301.8 161.5,300.5 161.0,298.9 160.5,298.1 160.0,295.6 159.5,295.1 159.0,295.8 158.5,295.4 158.0,295.1 157.5,295.0 157.0,295.2 156.5,295.2 156.0,295.9 155.5,295.4 155.0,294.7 154.5,296.1 154.0,295.4 153.5,295.3 153.0,296.0 152.5,294.9 152.0,294.1 151.5,294.1 151.0,293.8 150.5,292.7 150.0,291.4 149.5,290.6 149.0,291.3 148.5,288.8 148.0,288.5 147.5,288.2 147.0,287.6 146.5,286.8 146.0,286.6 145.5,284.8 145.0,285.3 144.5,285.2 144.0,285.7 143.5,285.2 143.0,285.8 142.5,285.9 142.0,286.4 141.5,286.6 141.0,287.6 140.5,287.3 140.0,288.5 139.5,288.2 139.0,288.7 138.5,289.5 138.0,289.4 137.5,290.7 137.0,291.3 136.5,291.5 136.0,290.0 135.5,290.0 135.0,291.1 134.5,290.0 134.0,290.6 133.5,290.1 133.0,289.5 132.5,290.1 132.0,291.0 131.5,289.1 131.0,289.2 130.5,287.8 130.0,286.8 129.5,285.9 129.0,284.1 128.5,282.8 128.0,281.3 127.5,280.0 127.0,279.0 126.5,278.0 126.0,278.0 125.5,276.9 125.0,276.4 124.5,275.4 124.0,275.6 123.5,274.9 123.0,273.6" fill="#f4f45a"/>
<polyline points="123.0,267.2 123.5,277.2 124.0,270.9 124.5,278.4 125.0,270.9 125.5,277.2 126.0,272.8 126.5,279.9 127.0,273.9 127.5,281.2 128.0,273.4 128.5,281.2 129.0,279.3 129.5,288.7 130.0,279.7 130.5,293.8 131.0,282.8 131.5,290.6 132.0,286.0 132.5,291.6 133.0,290.1 133.5,290.3 134.0,286.3 134.5,292.3 135.0,287.4 135.5,293.5 136.0,282.4 136.5,293.1 137.0,284.4 137.5,292.8 138.0,284.0 138.5,290.7 139.0,283.4 139.5,291.2 140.0,281.8 140.5,288.1 141.0,281.0 141.5,289.6 142.0,282.7 142.5,287.3 143.0,279.5 143.5,288.2 144.0,278.8 144.5,286.6 145.0,278.6 145.5,287.9 146.0,280.8 146.5,285.6 147.0,280.8 147.5,289.6 148.0,282.1 148.5,289.7 149.0,284.3 149.5,289.2 150.0,285.0 150.5,294.8 151.0,286.5 151.5,295.2 152.0,281.8 152.5,298.7 153.0,286.8 153.5,296.8 154.0,290.6 154.5,300.1 155.0,291.9 155.5,295.9 156.0,294.4 156.5,299.1 157.0,290.3 157.5,297.6 158.0,289.2 158.5,302.9 159.0,289.8 159.5,297.9 160.0,289.6 160.5,297.4 161.0,287.5 161.5,300.3 162.0,297.3 162.5,306.9 163.0,292.9 163.5,308.7 164.0,303.7 164.5,310.7 165.0,306.0 165.5,312.1 166.0,301.9 166.5,308.4 167.0,299.5 167.5,308.1 168.0,297.6 168.5,303.7 169.0,295.0 169.5,300.8 170.0,288.5 170.5,302.0 171.0,290.4 171.5,299.7 172.0,289.7 172.5,298.1 173.0,289.0 173.5,298.9 174.0,291.5 174.5,300.7 175.0,289.9 175.5,291.9 176.0,287.1 176.5,293.4 177.0,295.3 177.5,297.0 178.0,290.7 178.5,294.9 179.0,290.4 179.5,298.4 180.0,291.0 180.5,297.4 181.0,294.9 181.5,296.7 182.0,293.0 182.5,300.5 183.0,286.9 183.5,300.7 184.0,297.4 184.5,310.6 185.0,300.7 185.5,309.9 186.0,305.8 186.5,314.6 187.0,310.0 187.5,315.3 188.0,312.5 188.5,315.2 189.0,307.3 189.5,316.5 190.0,299.9 190.5,308.3 191.0,297.4 191.5,303.9 192.0,291.9 192.5,296.1 193.0,286.4 193.5,298.1 194.0,289.3 194.5,299.5 195.0,287.5 195.5,293.5 196.0,288.2 196.5,293.3 197.0,286.4 197.5,291.5 198.0,284.3 198.5,289.8 199.0,288.2 199.5,296.9 200.0,293.0 200.5,294.9 201.0,289.8 201.5,299.7 202.0,288.7 202.5,306.7 203.0,294.2 203.5,302.4 204.0,299.2 204.5,301.7 205.0,298.4 205.5,304.9 206.0,297.5 206.5,308.0 207.0,294.9 207.5,307.0 208.0,300.0 208.5,308.5 209.0,297.1 209.5,304.9 210.0,297.4 210.5,303.7 211.0,295.7 211.5,304.3 212.0,291.8 212.5,300.4 213.0,291.5 213.5,296.8 214.0,285.7 214.5,298.2 215.0,285.4 215.5,295.8 216.0,287.0 216.5,297.5 217.0,286.5 217.5,294.8 218.0,288.0 218.5,295.3 219.0,290.2 219.5,292.3 220.0,284.7 220.5,293.0 221.0,284.5 221.5,293.1 222.0,288.0 222.5,291.2 223.0,291.9 223.5,298.8 224.0,289.3 224.5,294.1 225.0,285.6 225.5,294.9 226.0,290.3 226.5,295.0 227.0,287.8 227.5,294.3 228.0,288.5 228.5,298.7 229.0,291.7 229.5,300.3 230.0,294.5 230.5,298.8 231.0,294.8 231.5,310.7 232.0,297.7 232.5,307.6 233.0,298.5 233.5,307.9 234.0,300.7 234.5,307.4 235.0,300.9 235.5,310.4 236.0,301.1 236.5,304.0 237.0,294.8 237.5,306.1 238.0,296.2 238.5,306.7 239.0,298.0 239.5,305.5 240.0,298.2 240.5,302.9 241.0,294.3 241.5,304.0 242.0,293.6 242.5,303.3 243.0,293.2 243.5,309.0 244.0,295.1 244.5,297.9 245.0,293.4 245.5,303.5 246.0,298.5 246.5,306.7 247.0,298.8 247.5,306.2 248.0,300.2 248.5,307.0 249.0,301.2 249.5,307.9 250.0,298.9 250.5,308.5 251.0,301.7 251.5,309.6 252.0,298.9 252.5,311.0 253.0,299.5 253.5,311.7 254.0,300.8 254.5,309.9 255.0,304.5 255.5,311.9 256.0,302.2 256.5,311.1 257.0,304.4 257.5,310.9 258.0,304.2 258.5,307.7 259.0,299.2 259.5,308.8 260.0,301.5 260.5,307.5 261.0,296.1 261.5,301.7 262.0,295.0 262.5,304.7 263.0,296.1 263.5,303.7 264.0,294.0 264.5,294.4 265.0,294.4 265.5,301.8 266.0,295.5 266.5,298.2 267.0,294.9 267.5,302.8 268.0,297.4 268.5,301.9 269.0,295.2 269.5,297.6 270.0,294.2 270.5,297.6 271.0,295.8 271.5,303.2 272.0,299.9 272.5,297.5 273.0,290.9 273.5,302.6 274.0,289.3 274.5,302.3 275.0,297.0 275.5,301.9 276.0,293.7 276.5,301.8 277.0,291.2 277.5,296.1 278.0,292.4 278.5,303.3 279.0,287.4 279.5,301.2 280.0,296.0 280.5,303.4 281.0,297.6 281.5,303.0 282.0,295.0 282.5,303.0 283.0,298.4 283.5,300.0 284.0,297.0 284.5,308.0 285.0,295.3 285.5,303.6 286.0,296.6 286.5,303.4 287.0,296.6 287.5,298.9 288.0,296.9 288.5,301.0 289.0,292.9 289.5,302.5 290.0,293.4 290.5,300.9 291.0,296.0 291.5,304.2 292.0,295.5 292.5,303.4 293.0,291.1 293.5,304.2 294.0,299.3 294.5,306.2 295.0,301.2 295.5,308.9 296.0,300.8 296.5,307.9 297.0,299.3 297.5,306.3 298.0,302.2 298.5,309.0 299.0,303.8 299.5,305.0 300.0,306.5 300.5,312.8 301.0,304.9 301.5,310.3 302.0,306.6 302.5,311.5 303.0,305.9 303.5,304.7 304.0,302.6 304.5,308.1 305.0,300.1 305.5,309.2 306.0,297.2 306.5,305.3 307.0,295.1 307.5,305.4 308.0,295.5 308.5,304.4 309.0,290.6 309.5,303.0 310.0,297.0 310.5,304.5 311.0,295.0 311.5,302.5 312.0,297.0 312.5,303.6 313.0,297.2 313.5,304.4 314.0,297.0 314.5,302.5 315.0,294.9 315.5,296.2 316.0,297.3 316.5,302.0 317.0,294.9 317.5,301.1 318.0,292.9 318.5,305.6 319.0,293.8 319.5,299.1 320.0,294.1 320.5,302.8 321.0,294.3 321.5,303.3 322.0,299.2 322.5,303.5 323.0,297.8 323.5,308.2 324.0,298.7 324.5,306.9 325.0,298.5 325.5,312.2 326.0,299.9 326.5,310.5 327.0,298.9 327.5,311.9 328.0,301.0 328.5,308.4 329.0,295.0 329.5,310.3 330.0,304.0 330.5,307.5 331.0,298.6 331.5,302.3 332.0,298.8 332.5,306.7 333.0,297.3 333.5,306.7 334.0,296.2 334.5,304.0 335.0,290.7 335.5,303.0 336.0,295.7 336.5,300.6 337.0,293.5 337.5,302.1 338.0,297.8 338.5,304.4 339.0,298.7 339.5,305.3 340.0,299.0 340.5,301.8 341.0,294.3 341.5,306.4 342.0,299.1 342.5,306.5 343.0,303.0 343.5,303.7 344.0,296.9 344.5,309.4 345.0,299.2 345.5,312.3 346.0,304.2 346.5,309.7 347.0,304.7 347.5,311.0 348.0,302.4 348.5,309.4 349.0,307.0 349.5,306.3 350.0,301.6 350.5,309.3 351.0,300.2 351.5,305.5 352.0,297.5 352.5,304.3 353.0,297.1 353.5,302.7 354.0,296.2 354.5,302.1 355.0,295.5 355.5,298.9 356.0,296.3 356.5,295.9 357.0,294.5 357.5,301.5 358.0,298.6 358.5,300.5 359.0,296.7 359.5,302.4 360.0,289.6 360.5,305.4 361.0,296.2 361.5,306.1 362.0,300.4 362.5,304.0 363.0,301.4 363.5,307.7 364.0,298.8 364.5,308.2 365.0,298.5 365.5,309.6 366.0,300.2 366.5,309.6 367.0,300.1 367.5,304.9 368.0,303.2 368.5,310.1 369.0,304.9 369.5,308.4 370.0,304.9 370.5,310.7 371.0,305.6 371.5,310.6 372.0,302.0 372.5,307.0 373.0,301.7 373.5,308.9 374.0,298.7 374.5,305.6 375.0,298.7 375.5,305.4 376.0,298.8 376.5,305.8 377.0,297.8 377.5,304.5 378.0,294.4 378.5,302.0 379.0,296.6 379.5,294.5 380.0,295.3 380.5,300.8 381.0,298.2 381.5,303.4 382.0,297.7 382.5,300.9 383.0,297.0 383.5,303.7 384.0,296.3 384.5,306.6 385.0,294.3 385.5,305.8 386.0,296.0 386.5,304.6 387.0,293.0 387.5,307.1 388.0,297.8 388.5,306.3 389.0,299.9 389.5,311.3 390.0,301.1 390.5,312.5 391.0,306.0 391.5,315.0 392.0,306.8 392.5,316.0 393.0,308.7 393.5,317.1 394.0,311.9 394.5,315.2 395.0,306.6 395.5,309.6 396.0,305.7 396.5,312.4 397.0,305.9 397.5,307.0 398.0,299.0 398.5,306.7 399.0,297.4 399.5,313.4 400.0,297.0 400.5,302.6 401.0,302.4 401.5,306.2 402.0,294.5 402.5,305.5 403.0,303.4 403.5,302.0 404.0,299.0 404.5,307.7 405.0,298.5 405.5,309.1 406.0,300.5 406.5,317.7 407.0,300.6 407.5,318.5 408.0,302.1 408.5,311.1 409.0,302.5 409.5,310.9 410.0,307.8 410.5,312.5 411.0,305.9 411.5,312.5 412.0,302.6 412.5,310.9 413.0,306.5 413.5,316.4 414.0,307.7 414.5,323.1 415.0,307.9 415.5,316.8 416.0,306.0 416.5,314.0 417.0,305.0 417.5,309.7 418.0,307.5 418.5,312.7 419.0,302.9 419.5,313.6 420.0,304.6 420.5,311.5 421.0,303.4 421.5,308.7 422.0,299.1 422.5,307.5 423.0,302.4 423.5,312.7 424.0,303.3 424.5,308.5 425.0,305.3 425.5,310.1 426.0,311.3 426.5,310.5 427.0,305.4 427.5,312.2 428.0,305.7 428.5,309.5 429.0,308.7 429.5,311.8 430.0,305.2 430.5,311.8 431.0,306.0 431.5,313.6 432.0,305.1 432.5,319.5 433.0,305.9 433.5,314.0 434.0,306.8 434.5,316.5 435.0,308.1 435.5,311.6 436.0,303.8 436.5,315.6 437.0,309.0 437.5,316.7 438.0,309.5 438.5,312.0 439.0,306.0 439.5,312.5 440.0,308.1 440.5,312.6 441.0,305.4 441.5,314.6 442.0,306.9 442.5,316.1 443.0,311.9 443.5,319.3 444.0,306.8 444.5,318.3 445.0,307.9 445.5,319.4 446.0,307.5 446.5,318.7 447.0,301.4 447.5,313.4 448.0,314.2 448.5,310.5 449.0,306.3 449.5,314.4 450.0,308.8 450.5,307.1 451.0,303.1 451.5,312.8 452.0,306.1 452.5,312.7 453.0,311.8 453.5,317.0 454.0,303.2 454.5,319.0 455.0,307.9 455.5,315.6 456.0,305.1 456.5,316.8 457.0,307.6 457.5,317.1 458.0,312.7 458.5,318.5 459.0,308.3 459.5,313.6 460.0,307.7 460.5,317.4 461.0,307.7 461.5,313.5 462.0,310.6 462.5,320.0 463.0,307.4 463.5,315.3 464.0,315.2 464.5,314.5 465.0,306.0 465.5,312.8 466.0,308.7 466.5,313.9 467.0,306.7 467.5,313.8 468.0,307.2 468.5,310.5 469.0,302.9 469.5,311.4 470.0,311.6 470.5,312.6 471.0,307.8 471.5,311.4 472.0,304.7 472.5,311.6 473.0,309.2 473.5,312.5 474.0,306.6 474.5,312.9 475.0,306.4 475.5,312.0 476.0,309.0 476.5,312.4 477.0,307.0 477.5,314.2 478.0,308.4 478.5,315.8 479.0,309.6 479.5,315.1 480.0,301.1 480.5,314.0 481.0,309.9 481.5,311.0 482.0,307.1 482.5,312.7 483.0,307.8 483.5,309.8 484.0,307.5 484.5,318.4 485.0,306.7 485.5,317.2 486.0,307.8 486.5,318.4 487.0,304.4 487.5,316.6 488.0,307.8 488.5,311.3 489.0,304.6 489.5,315.7 490.0,309.2 490.5,316.3 491.0,305.7 491.5,313.1 492.0,305.0 492.5,313.1 493.0,305.8 493.5,303.8 494.0,305.6 494.5,309.4 495.0,302.0 495.5,311.2 496.0,301.5 496.5,312.8 497.0,302.5 497.5,308.5 498.0,300.6 498.5,308.7 499.0,298.9 499.5,312.2 500.0,303.9 500.5,308.2 501.0,305.3 501.5,317.6 502.0,302.2 502.5,312.4 503.0,304.1 503.5,312.2 504.0,301.1 504.5,314.6 505.0,305.1 505.5,311.5 506.0,307.0 506.5,315.7 507.0,307.2 507.5,318.3 508.0,310.1 508.5,318.5 509.0,310.7 509.5,316.6 510.0,309.4 510.5,316.6 511.0,310.0 511.5,316.6 512.0,311.6 512.5,318.9 513.0,309.8 513.5,317.6 514.0,309.0 514.5,321.3 515.0,313.8 515.5,318.1 516.0,309.8 516.5,320.8 517.0,313.1 517.5,321.5 518.0,318.2 518.5,322.5 519.0,313.8 519.5,322.9 520.0,316.8 520.5,326.0 521.0,317.7 521.5,321.2 522.0,316.4 522.5,324.5 523.0,314.2 523.5,321.5 524.0,315.7 524.5,320.4 525.0,313.7 525.5,319.6 526.0,311.5 526.5,319.8 527.0,311.4 527.5,321.4 528.0,310.0 528.5,321.1 529.0,311.0 529.5,318.8 530.0,308.9 530.5,317.5 531.0,305.4 531.5,317.6 532.0,306.2 532.5,314.2 533.0,300.7 533.5,311.2 534.0,306.8 534.5,310.3 535.0,301.6 535.5,311.9 536.0,309.7 536.5,311.7 537.0,301.5 537.5,306.6 538.0,299.6 538.5,315.0 539.0,301.8 539.5,304.0 540.0,301.0 540.5,307.5 541.0,301.4 541.5,302.0 542.0,300.7 542.5,308.0 543.0,300.9 543.5,307.3 544.0,300.5 544.5,302.3 545.0,300.1 545.5,306.4 546.0,297.4 546.5,306.2 547.0,302.3 547.5,308.8 548.0,302.9 548.5,311.2 549.0,306.4 549.5,310.5 550.0,308.6 550.5,318.2 551.0,307.3 551.5,307.5 552.0,307.0 552.5,312.0 553.0,306.7 553.5,313.1 554.0,307.6 554.5,317.2 555.0,312.8 555.5,316.8 556.0,310.0 556.5,318.4 557.0,312.9 557.5,320.8 558.0,310.1 558.5,318.3 559.0,314.1 559.5,320.2 560.0,314.2 560.5,320.6 561.0,313.8 561.5,321.7 562.0,316.9 562.5,317.3 563.0,315.8 563.5,324.6 564.0,318.3 564.5,331.5 565.0,315.2 565.5,328.6 566.0,319.6 566.5,330.8 567.0,322.4 567.5,328.6 568.0,324.7 568.5,337.4 569.0,326.9 569.5,335.6 570.0,322.5 570.5,339.1 571.0,331.0 571.5,339.3 572.0,333.1 572.5,339.6 573.0,329.5 573.5,345.1 574.0,334.2 574.5,351.9 575.0,336.8 575.5,348.4 576.0,341.3 576.5,353.8 577.0,345.9 577.5,352.9 578.0,343.8 578.5,351.1 579.0,344.3 579.5,353.7 580.0,345.6 580.5,355.8 581.0,340.9 581.5,348.2 582.0,337.6 582.5,351.4 583.0,343.3 583.5,349.0 584.0,335.9 584.5,347.7 585.0,343.3 585.5,348.8 586.0,338.6 586.5,346.7 587.0,335.3 587.5,346.4 588.0,341.5 588.5,344.2 589.0,340.8 589.5,347.0 590.0,336.8 590.5,344.1 591.0,338.1 591.5,341.0 592.0,338.2 592.5,345.9 593.0,333.4 593.5,344.3 594.0,335.8 594.5,342.1 595.0,335.4 595.5,343.3 596.0,336.4 596.5,341.7 597.0,327.0 597.5,344.9 598.0,335.3 598.5,342.1 599.0,333.5 599.5,337.9 600.0,334.2 600.5,338.0 601.0,335.5 601.5,342.6 602.0,332.3 602.5,337.6 603.0,330.5 603.5,338.4 604.0,323.2 604.5,340.2 605.0,331.0 605.5,338.9 606.0,328.9 606.5,338.5 607.0,326.2 607.5,338.6 608.0,326.1 608.5,337.2 609.0,330.4 609.5,337.5 610.0,325.6 610.5,336.4 611.0,328.6 611.5,327.6 612.0,323.8 612.5,332.9 613.0,324.4 613.5,334.9 614.0,326.8 614.5,334.9 615.0,324.9 615.5,336.3 616.0,325.9 616.5,331.5 617.0,322.2 617.5,334.7 618.0,324.9 618.5,332.3 619.0,325.2 619.5,339.8 620.0,327.3 620.5,331.4 621.0,325.5 621.5,328.8 622.0,327.6 622.5,334.4 623.0,330.7 623.5,331.9 624.0,325.6 624.5,335.5 625.0,330.0 625.5,334.5 626.0,324.8 626.5,328.0 627.0,328.3 627.5,335.5 628.0,325.3 628.5,333.4 629.0,325.5 629.5,327.9 630.0,325.2 630.5,335.8 631.0,328.3 631.5,333.5 632.0,328.0 632.5,335.4 633.0,328.4 633.5,332.3 634.0,324.8 634.5,334.8 635.0,319.7 635.5,327.0 636.0,324.4 636.5,337.2 637.0,324.4 637.5,331.7 638.0,325.7 638.5,332.8 639.0,323.2 639.5,331.7 640.0,325.2 640.5,334.5 641.0,327.7 641.5,331.8 642.0,323.1 642.5,331.4 643.0,323.5 643.5,336.0 644.0,322.7 644.5,334.5 645.0,326.5 645.5,335.5 646.0,325.5 646.5,333.1 647.0,321.6 647.5,331.4 648.0,324.5 648.5,330.6 649.0,324.1 649.5,334.0 650.0,321.8 650.5,329.8 651.0,323.3 651.5,332.0 652.0,326.7 652.5,334.2 653.0,321.1 653.5,331.0 654.0,321.3 654.5,329.2 655.0,322.0 655.5,328.7 656.0,318.1 656.5,327.0 657.0,322.0 657.5,332.1 658.0,320.6 658.5,329.0 659.0,320.2 659.5,330.3 660.0,320.7 660.5,333.5 661.0,318.6 661.5,329.5 662.0,324.3 662.5,327.7 663.0,325.1 663.5,327.6 664.0,323.9 664.5,329.8 665.0,323.2 665.5,331.7 666.0,326.1 666.5,333.4 667.0,317.4 667.5,327.5 668.0,321.2 668.5,330.5 669.0,322.5 669.5,324.7 670.0,322.3 670.5,329.8 671.0,319.2 671.5,327.6 672.0,322.5 672.5,330.1 673.0,320.4 673.5,331.9 674.0,321.9 674.5,323.2 675.0,318.4 675.5,329.7 676.0,322.1 676.5,333.5 677.0,323.9 677.5,328.9 678.0,325.2 678.5,330.2 679.0,322.9 679.5,322.8 680.0,321.8 680.5,329.4 681.0,320.5 681.5,334.3 682.0,320.9 682.5,329.5 683.0,322.8 683.5,329.2 684.0,320.5 684.5,326.6 685.0,321.4 685.5,332.5 686.0,322.6 686.5,327.1 687.0,320.1 687.5,326.6 688.0,324.4 688.5,329.6 689.0,324.7 689.5,332.0 690.0,322.9 690.5,330.8 691.0,324.5 691.5,329.8 692.0,323.0 692.5,328.3 693.0,326.3 693.5,328.0 694.0,321.7 694.5,328.5 695.0,323.2 695.5,330.3 696.0,323.1 696.5,329.5 697.0,321.8 697.5,331.0 698.0,318.7 698.5,326.0 699.0,320.8 699.5,330.2 700.0,322.2 700.5,329.9 701.0,320.0 701.5,329.2 702.0,321.6 702.5,327.2 703.0,321.8 703.5,327.9 704.0,320.5 704.5,329.8 705.0,321.0 705.5,327.4 706.0,322.1 706.5,327.3 707.0,320.1 707.5,325.8 708.0,318.9 708.5,326.3 709.0,321.1 709.5,329.7 710.0,322.9 710.5,329.2 711.0,319.1 711.5,328.0 712.0,320.1 712.5,328.3 713.0,317.3 713.5,328.9 714.0,321.4 714.5,328.1 715.0,320.5 715.5,325.8 716.0,319.1 716.5,328.0 717.0,317.0 717.5,326.3 718.0,318.3 718.5,323.8 719.0,315.5 719.5,325.7 720.0,317.6 720.5,330.5 721.0,317.5 721.5,327.9 722.0,316.4 722.5,321.0 723.0,316.6 723.5,318.8 724.0,315.4 724.5,319.2 725.0,317.4 725.5,321.5 726.0,317.6 726.5,325.0 727.0,315.5 727.5,324.2 728.0,314.6 728.5,322.9 729.0,316.1 729.5,325.3 730.0,318.8 730.5,325.8 731.0,314.9 731.5,326.0 732.0,316.0 732.5,324.4 733.0,317.7 733.5,326.9 734.0,316.2 734.5,324.6 735.0,319.0 735.5,325.0 736.0,318.0 736.5,325.7 737.0,317.6 737.5,325.6 738.0,318.4 738.5,325.1 739.0,319.9 739.5,321.2 740.0,316.1 740.5,324.6 741.0,318.2 741.5,323.5 742.0,316.3 742.5,324.4 743.0,318.3 743.5,324.6 744.0,315.4 744.5,323.8 745.0,314.7 745.5,323.5 746.0,313.7 746.5,323.3 747.0,317.2 747.5,322.5 748.0,311.9 748.5,320.1 749.0,317.9 749.5,321.5 750.0,314.1 750.5,322.5 751.0,315.1 751.5,322.3 752.0,310.9 752.5,321.1 753.0,316.1 753.5,324.1 754.0,316.7 754.5,316.4 755.0,312.2 755.5,324.2 756.0,316.2 756.5,324.1 757.0,318.4 757.5,324.8 758.0,316.3 758.5,325.6 759.0,312.8 759.5,323.7 760.0,317.5 760.5,321.7 761.0,315.4 761.5,326.1 762.0,317.1 762.5,325.7 763.0,317.0 763.5,325.8 764.0,317.1 764.5,323.9 765.0,317.5 765.5,323.6 766.0,317.6 766.5,317.9 767.0,311.4 767.5,323.9 768.0,317.0 768.5,322.0 769.0,318.0 769.5,323.0 770.0,319.4 770.5,321.9 771.0,313.7 771.5,325.0 772.0,316.7 772.5,321.0 773.0,317.3 773.5,324.4 774.0,313.1 774.5,322.9 775.0,312.9 775.5,316.7 776.0,320.1 776.5,324.7 777.0,318.2 777.5,324.4 778.0,315.9 778.5,325.0 779.0,314.4 779.5,324.8 780.0,314.2 780.5,323.7 781.0,313.8 781.5,321.1 782.0,316.3 782.5,329.2 783.0,323.3 783.5,329.3 784.0,314.8 784.5,328.1 785.0,317.6 785.5,326.5 786.0,324.0 786.5,324.6 787.0,318.9 787.5,326.3 788.0,318.1 788.5,326.0 789.0,321.0 789.5,328.1 790.0,320.3 790.5,327.1 791.0,319.3 791.5,326.7 792.0,321.6 792.5,327.2 793.0,318.9 793.5,327.9 794.0,321.4 794.5,327.5 795.0,321.8 795.5,329.5 796.0,321.4 796.5,327.8 797.0,323.6 797.5,332.6 798.0,324.6 798.5,332.7 799.0,324.8 799.5,333.8 800.0,329.5 800.5,329.4 801.0,327.6 801.5,333.1 802.0,325.3 802.5,332.4 803.0,324.7 803.5,334.3 804.0,327.4 804.5,334.0 805.0,326.9 805.5,333.9 806.0,330.9 806.5,334.7 807.0,328.3 807.5,334.2 808.0,329.1 808.5,337.8 809.0,329.8 809.5,335.9 810.0,322.1 810.5,337.1 811.0,329.7 811.5,335.8 812.0,328.2 812.5,335.2 813.0,327.0 813.5,332.6 814.0,329.1 814.5,332.1 815.0,328.5 815.5,340.9 816.0,336.2 816.5,333.2 817.0,329.2 817.5,334.9 818.0,328.5 818.5,333.9 819.0,327.9 819.5,328.7 820.0,327.0 820.5,341.2 821.0,327.8 821.5,333.4 822.0,327.2 822.5,336.0 823.0,334.4 823.5,340.7 824.0,332.4 824.5,333.6 825.0,332.0 825.5,339.9 826.0,332.7 826.5,343.6 827.0,337.9 827.5,343.8 828.0,335.0 828.5,346.5 829.0,340.1 829.5,344.5 830.0,338.2 830.5,348.6 831.0,338.9 831.5,346.9 832.0,336.8 832.5,346.1 833.0,338.1 833.5,345.0 834.0,339.6 834.5,347.8 835.0,337.9 835.5,343.9 836.0,335.6 836.5,341.5 837.0,337.4 837.5,339.2 838.0,338.1 838.5,349.5 839.0,335.3 839.5,343.5 840.0,344.3 840.5,344.7 841.0,337.0 841.5,344.9 842.0,338.0 842.5,342.1 843.0,336.9 843.5,345.7 844.0,334.1 844.5,342.2 845.0,336.7 845.5,344.3 846.0,338.4 846.5,347.5 847.0,337.9 847.5,345.6 848.0,339.6 848.5,345.6 849.0,341.6 849.5,351.1 850.0,337.6 850.5,345.1 851.0,339.1 851.5,345.3 852.0,338.0 852.5,347.7 853.0,336.4 853.5,345.5 854.0,338.7 854.5,343.4 855.0,339.1 855.5,342.9 856.0,335.8 856.5,343.5 857.0,334.9 857.5,338.8 858.0,338.2 858.5,343.0 859.0,337.4 859.5,342.4 860.0,335.6 860.5,342.0 861.0,331.4 861.5,343.0 862.0,331.8 862.5,341.2 863.0,335.4 863.5,337.7 864.0,334.2 864.5,338.5 865.0,335.7 865.5,337.7 866.0,325.5 866.5,338.7 867.0,326.3 867.5,336.8 868.0,325.1 868.5,339.8 869.0,328.8 869.5,338.8 870.0,326.5 870.5,339.0 871.0,334.9 871.5,337.3 872.0,331.8 872.5,339.4 873.0,328.3 873.5,340.6 874.0,332.1 874.5,341.5 875.0,329.3 875.5,336.2 876.0,332.7 876.5,332.6 877.0,333.2 877.5,340.0 878.0,333.4 878.5,340.6 879.0,334.8 879.5,339.3 880.0,332.6 880.5,338.5 881.0,336.1 881.5,334.8 882.0,334.6 882.5,340.0 883.0,330.8 883.5,338.6 884.0,332.5 884.5,336.5 885.0,332.8 885.5,341.0 886.0,332.2 886.5,341.1 887.0,331.6 887.5,340.3 888.0,336.9 888.5,333.5 889.0,333.7 889.5,341.1 890.0,332.0 890.5,339.6 891.0,331.6 891.5,338.5 892.0,336.5 892.5,343.5 893.0,333.3 893.5,341.7 894.0,329.4 894.5,337.8 895.0,331.5 895.5,340.0 896.0,334.8 896.5,341.5 897.0,336.0 897.5,343.6 898.0,334.3 898.5,342.4 899.0,328.6 899.5,341.6 900.0,334.7 900.5,343.2 901.0,335.4 901.5,340.9 902.0,335.5 902.5,341.8 903.0,333.9 903.5,343.8 904.0,332.4 904.5,342.0 905.0,335.9 905.5,342.3 906.0,330.0 906.5,342.1 907.0,333.0 907.5,340.7 908.0,333.5 908.5,341.4 909.0,337.4 909.5,339.9 910.0,331.5 910.5,333.0 911.0,328.9 911.5,333.4 912.0,332.2 912.5,335.4 913.0,330.2 913.5,337.3 914.0,328.6 914.5,334.0 915.0,326.6 915.5,337.7 916.0,325.9 916.5,337.8 917.0,329.2 917.5,335.4 918.0,330.5 918.5,332.5 919.0,328.7 919.5,334.7 920.0,329.4 920.5,337.2 921.0,328.6 921.5,337.4 922.0,325.8 922.5,333.0 923.0,326.9 923.5,335.4 924.0,325.8 924.5,334.7 925.0,327.3 925.5,332.4 926.0,323.7 926.5,330.1 927.0,323.6 927.5,332.4 928.0,324.0 928.5,330.4 929.0,325.1 929.5,328.9 930.0,325.1 930.5,332.5 931.0,322.1 931.5,326.5 932.0,322.0 932.5,327.5 933.0,322.1 933.5,329.5 934.0,327.4 934.5,327.7 935.0,320.7 935.5,328.9 936.0,320.8 936.5,328.3 937.0,320.3 937.5,326.1 938.0,320.4 938.5,329.8 939.0,318.7 939.5,327.0 940.0,317.2 940.5,325.8 941.0,321.2 941.5,326.4 942.0,319.4 942.5,328.8 943.0,315.1 943.5,327.5 944.0,320.5 944.5,322.5 945.0,316.1 945.5,328.3 946.0,319.4 946.5,328.3 947.0,318.6 947.5,326.0 948.0,319.7 948.5,327.8 949.0,319.3 949.5,329.5 950.0,319.5 950.5,327.6 951.0,316.0 951.5,324.0 952.0,313.8 952.5,328.7 953.0,319.7 953.5,323.8 954.0,317.3 954.5,324.9 955.0,319.3 955.5,320.4 956.0,318.3 956.5,324.6 957.0,318.1 957.5,324.7 958.0,319.2 958.5,326.8 959.0,316.2 959.5,323.3 960.0,315.2 960.5,325.3 961.0,316.1 961.5,327.5 962.0,320.3 962.5,323.2 963.0,318.9 963.5,321.9 964.0,316.9 964.5,326.0 965.0,320.5 965.5,327.5 966.0,318.3 966.5,328.0 967.0,320.4 967.5,330.2 968.0,320.2 968.5,325.8 969.0,317.3 969.5,328.9 970.0,316.3 970.5,327.5 971.0,320.1 971.5,326.9 972.0,320.4 972.5,334.0 973.0,318.7 973.5,331.1 974.0,323.4 974.5,328.2 975.0,321.4 975.5,332.5 976.0,320.6 976.5,327.7 977.0,320.8 977.5,326.2 978.0,323.4 978.5,325.7 979.0,321.6 979.5,329.3 980.0,319.8 980.5,331.2 981.0,321.2 981.5,327.7 982.0,312.0 982.5,327.3 983.0,320.0 983.5,329.7 984.0,320.5 984.5,328.6 985.0,320.6 985.5,329.7 986.0,313.8 986.5,329.0 987.0,322.0 987.5,328.5 988.0,324.4 988.5,330.7 989.0,321.2 989.5,332.7 990.0,326.8 990.5,331.3 991.0,324.6 991.5,333.3 992.0,325.9 992.5,330.9 993.0,326.0 993.5,333.7 994.0,325.5 994.5,329.1 995.0,323.4 995.5,330.4 996.0,325.7 996.5,326.9 997.0,325.6 997.5,331.6 998.0,329.4 998.5,331.5 999.0,326.8 999.5,332.7 1000.0,323.9 1000.5,331.9 1001.0,327.5 1001.5,332.3 1002.0,325.9 1002.5,332.8 1003.0,328.3 1003.5,334.9 1004.0,327.1 1004.5,336.1 1005.0,331.2 1005.5,334.2 1006.0,320.1 1006.5,334.5 1007.0,331.0 1007.5,335.8 1008.0,323.6 1008.5,334.6 1009.0,327.5 1009.5,335.2 1010.0,330.4 1010.5,335.8 1011.0,330.5 1011.5,333.9 1012.0,330.6 1012.5,337.3 1013.0,328.8 1013.5,335.2 1014.0,328.0 1014.5,336.5 1015.0,332.8 1015.5,339.9 1016.0,331.3 1016.5,340.8 1017.0,328.2 1017.5,343.7 1018.0,331.4 1018.5,340.5 1019.0,334.1 1019.5,334.0 1020.0,330.1 1020.5,339.2 1021.0,331.3 1021.5,340.3 1022.0,329.7 1022.5,341.5 1023.0,332.4 1023.5,344.1 1024.0,334.1 1024.5,343.2 1025.0,333.5 1025.5,337.6 1026.0,333.5 1026.5,341.2 1027.0,332.9 1027.5,336.7 1028.0,325.7 1028.5,339.4 1029.0,334.3 1029.5,340.4 1030.0,334.6 1030.5,338.4 1031.0,337.2 1031.5,341.1 1032.0,334.3 1032.5,340.4 1033.0,332.8 1033.5,339.9 1034.0,335.0 1034.5,342.8 1035.0,336.0 1035.5,341.2 1036.0,335.4 1036.5,344.4 1037.0,335.4 1037.5,339.5 1038.0,337.7 1038.5,344.6 1039.0,338.3 1039.5,345.4 1040.0,336.5 1040.5,346.9 1041.0,332.9 1041.5,345.4 1042.0,342.6 1042.5,343.7 1043.0,335.9 1043.5,341.3 1044.0,336.6 1044.5,342.5 1045.0,338.1 1045.5,345.0 1046.0,345.3 1046.5,344.0 1047.0,334.8 1047.5,346.2 1048.0,339.2 1048.5,342.9 1049.0,335.4 1049.5,346.2 1050.0,337.4 1050.5,346.4 1051.0,339.4 1051.5,344.1 1052.0,337.1 1052.5,344.6 1053.0,339.7 1053.5,348.7 1054.0,338.2" fill="none" stroke="#f4f45a" stroke-width="1.2" stroke-linejoin="bevel"/>
<line x1="692.5" y1="179" x2="692.5" y2="190" stroke="#d8d840" stroke-width="1"/>
<line x1="692.5" y1="189" x2="692.5" y2="326" stroke="#f4f45a" stroke-width="2"/>
<line x1="123.5" y1="269.5" x2="123.5" y2="277.2" stroke="#e0e040" stroke-width="1"/>
<line x1="192.5" y1="282.0" x2="192.5" y2="301.4" stroke="#e0e040" stroke-width="1"/>
<line x1="223.5" y1="278.5" x2="223.5" y2="294.2" stroke="#e0e040" stroke-width="1"/>
<line x1="265.5" y1="281.0" x2="265.5" y2="305.4" stroke="#e0e040" stroke-width="1"/>
<line x1="279.5" y1="280.5" x2="279.5" y2="304.0" stroke="#e0e040" stroke-width="1"/>
<line x1="400.5" y1="271.5" x2="400.5" y2="306.2" stroke="#e0e040" stroke-width="1"/>
<line x1="407.5" y1="284.5" x2="407.5" y2="310.8" stroke="#e0e040" stroke-width="1"/>
<line x1="425.5" y1="269.5" x2="425.5" y2="313.7" stroke="#e0e040" stroke-width="1"/>
<line x1="415.5" y1="267.9" x2="415.5" y2="316.6" stroke="#e0e040" stroke-width="1"/>
<line x1="432.5" y1="275.4" x2="432.5" y2="315.9" stroke="#e0e040" stroke-width="1"/>
<line x1="434.5" y1="268.5" x2="434.5" y2="315.8" stroke="#e0e040" stroke-width="1"/>
<line x1="448.5" y1="282.3" x2="448.5" y2="315.8" stroke="#e0e040" stroke-width="1"/>
<line x1="445.5" y1="267.9" x2="445.5" y2="318.2" stroke="#e0e040" stroke-width="1"/>
<line x1="455.5" y1="270.5" x2="455.5" y2="313.9" stroke="#e0e040" stroke-width="1"/>
<line x1="542.5" y1="267.2" x2="542.5" y2="310.8" stroke="#e0e040" stroke-width="1"/>
<line x1="169.5" y1="286.4" x2="169.5" y2="300.5" stroke="#e8e840" stroke-width="1"/>
<line x1="337.5" y1="291.3" x2="337.5" y2="304.2" stroke="#e8e840" stroke-width="1"/>
<line x1="383.5" y1="292.7" x2="383.5" y2="305.8" stroke="#e8e840" stroke-width="1"/>
<line x1="422.5" y1="286.3" x2="422.5" y2="312.4" stroke="#e8e840" stroke-width="1"/>
<line x1="440.5" y1="290.0" x2="440.5" y2="315.4" stroke="#e8e840" stroke-width="1"/>
<line x1="452.5" y1="288.4" x2="452.5" y2="314.1" stroke="#e8e840" stroke-width="1"/>
<line x1="480.5" y1="284.9" x2="480.5" y2="315.2" stroke="#e8e840" stroke-width="1"/>
<line x1="469.5" y1="295.6" x2="469.5" y2="313.2" stroke="#e8e840" stroke-width="1"/>
<line x1="483.5" y1="295.3" x2="483.5" y2="315.9" stroke="#e8e840" stroke-width="1"/>
<line x1="581.5" y1="321.5" x2="581.5" y2="350.8" stroke="#e8e840" stroke-width="1"/>
<line x1="674.5" y1="301.0" x2="674.5" y2="331.6" stroke="#e8e840" stroke-width="1"/>
<line x1="728.5" y1="304.9" x2="728.5" y2="326.0" stroke="#e8e840" stroke-width="1"/>
<line x1="872.5" y1="325.8" x2="872.5" y2="339.8" stroke="#e8e840" stroke-width="1"/>
<line x1="904.5" y1="309.9" x2="904.5" y2="343.0" stroke="#e8e840" stroke-width="1"/>
<line x1="956.5" y1="310.5" x2="956.5" y2="326.5" stroke="#e8e840" stroke-width="1"/>
<line x1="436.0" y1="253.6" x2="436.0" y2="313.6" stroke="#e0e040" stroke-width="1"/>
<line x1="461.5" y1="259.2" x2="461.5" y2="311.6" stroke="#e0e040" stroke-width="1"/>
<rect x="116.6" y="256.8" width="12.8" height="12.4" fill="#2f563b" fill-opacity="0.88" stroke="#ff5a0a" stroke-width="1.1"/>
<text x="123.0" y="265.9" font-size="8.3" fill="#e8eee0" text-anchor="middle" font-family="Liberation Sans">9</text>
<rect x="185.6" y="269.3" width="12.8" height="12.4" fill="#2f563b" fill-opacity="0.88" stroke="#ff5a0a" stroke-width="1.1"/>
<text x="192.0" y="278.4" font-size="8.3" fill="#e8eee0" text-anchor="middle" font-family="Liberation Sans">17</text>
<rect x="216.6" y="265.8" width="12.8" height="12.4" fill="#2f563b" fill-opacity="0.88" stroke="#ff5a0a" stroke-width="1.1"/>
<text x="223.0" y="274.9" font-size="8.3" fill="#e8eee0" text-anchor="middle" font-family="Liberation Sans">13</text>
<rect x="258.8" y="268.3" width="12.8" height="12.4" fill="#2f563b" fill-opacity="0.88" stroke="#ff5a0a" stroke-width="1.1"/>
<text x="265.2" y="277.4" font-size="8.3" fill="#e8eee0" text-anchor="middle" font-family="Liberation Sans">15</text>
<rect x="272.8" y="267.8" width="12.8" height="12.4" fill="#2f563b" fill-opacity="0.88" stroke="#ff5a0a" stroke-width="1.1"/>
<text x="279.2" y="276.9" font-size="8.3" fill="#e8eee0" text-anchor="middle" font-family="Liberation Sans">14</text>
<rect x="393.6" y="258.8" width="12.8" height="12.4" fill="#2f563b" fill-opacity="0.88" stroke="#ff5a0a" stroke-width="1.1"/>
<text x="400.0" y="267.9" font-size="8.3" fill="#e8eee0" text-anchor="middle" font-family="Liberation Sans">11</text>
<rect x="401.3" y="271.8" width="12.8" height="12.4" fill="#2f563b" fill-opacity="0.88" stroke="#ff5a0a" stroke-width="1.1"/>
<text x="407.7" y="280.9" font-size="8.3" fill="#e8eee0" text-anchor="middle" font-family="Liberation Sans">18</text>
<rect x="418.6" y="256.8" width="12.8" height="12.4" fill="#2f563b" fill-opacity="0.88" stroke="#ff5a0a" stroke-width="1.1"/>
<text x="425.0" y="265.9" font-size="8.3" fill="#e8eee0" text-anchor="middle" font-family="Liberation Sans">8</text>
<rect x="409.1" y="255.2" width="12.8" height="12.4" fill="#2f563b" fill-opacity="0.88" stroke="#ff5a0a" stroke-width="1.1"/>
<text x="415.5" y="264.3" font-size="8.3" fill="#e8eee0" text-anchor="middle" font-family="Liberation Sans">6</text>
<rect x="426.2" y="262.7" width="12.8" height="12.4" fill="#2f563b" fill-opacity="0.88" stroke="#ff5a0a" stroke-width="1.1"/>
<text x="432.6" y="271.8" font-size="8.3" fill="#e8eee0" text-anchor="middle" font-family="Liberation Sans">12</text>
<rect x="427.6" y="255.8" width="12.8" height="12.4" fill="#2f563b" fill-opacity="0.88" stroke="#ff5a0a" stroke-width="1.1"/>
<text x="434.0" y="264.9" font-size="8.3" fill="#e8eee0" text-anchor="middle" font-family="Liberation Sans">7</text>
<rect x="441.6" y="269.6" width="12.8" height="12.4" fill="#2f563b" fill-opacity="0.88" stroke="#ff5a0a" stroke-width="1.1"/>
<text x="448.0" y="278.7" font-size="8.3" fill="#e8eee0" text-anchor="middle" font-family="Liberation Sans">16</text>
<rect x="438.6" y="255.2" width="12.8" height="12.4" fill="#2f563b" fill-opacity="0.88" stroke="#ff5a0a" stroke-width="1.1"/>
<text x="445.0" y="264.3" font-size="8.3" fill="#e8eee0" text-anchor="middle" font-family="Liberation Sans">5</text>
<rect x="448.6" y="257.8" width="12.8" height="12.4" fill="#2f563b" fill-opacity="0.88" stroke="#ff5a0a" stroke-width="1.1"/>
<text x="455.0" y="266.9" font-size="8.3" fill="#e8eee0" text-anchor="middle" font-family="Liberation Sans">10</text>
<rect x="535.6" y="254.5" width="12.8" height="12.4" fill="#2f563b" fill-opacity="0.88" stroke="#ff5a0a" stroke-width="1.1"/>
<text x="542.0" y="263.6" font-size="8.3" fill="#e8eee0" text-anchor="middle" font-family="Liberation Sans">4</text>
<line x1="123" y1="262" x2="1054.5" y2="262" stroke="#d07070" stroke-width="2" stroke-opacity="0.5"/>
<circle cx="169.9" cy="279.4" r="6.4" fill="#0c2a48" fill-opacity="0.85" stroke="#2880d0" stroke-width="1.05"/>
<text x="169.9" y="282.3" font-size="8.3" fill="#e8eef8" text-anchor="middle" font-family="Liberation Sans">20</text>
<circle cx="337.3" cy="284.3" r="6.4" fill="#0c2a48" fill-opacity="0.85" stroke="#2880d0" stroke-width="1.05"/>
<text x="337.3" y="287.2" font-size="8.3" fill="#e8eef8" text-anchor="middle" font-family="Liberation Sans">24</text>
<circle cx="383.5" cy="285.7" r="6.4" fill="#0c2a48" fill-opacity="0.85" stroke="#2880d0" stroke-width="1.05"/>
<text x="383.5" y="288.6" font-size="8.3" fill="#e8eef8" text-anchor="middle" font-family="Liberation Sans">25</text>
<circle cx="422.4" cy="279.3" r="6.4" fill="#0c2a48" fill-opacity="0.85" stroke="#2880d0" stroke-width="1.05"/>
<text x="422.4" y="282.2" font-size="8.3" fill="#e8eef8" text-anchor="middle" font-family="Liberation Sans">21</text>
<circle cx="440.4" cy="283.0" r="6.4" fill="#0c2a48" fill-opacity="0.85" stroke="#2880d0" stroke-width="1.05"/>
<text x="440.4" y="285.9" font-size="8.3" fill="#e8eef8" text-anchor="middle" font-family="Liberation Sans">23</text>
<circle cx="452.5" cy="281.4" r="6.4" fill="#0c2a48" fill-opacity="0.85" stroke="#2880d0" stroke-width="1.05"/>
<text x="452.5" y="284.3" font-size="8.3" fill="#e8eef8" text-anchor="middle" font-family="Liberation Sans">22</text>
<circle cx="480.0" cy="277.9" r="6.4" fill="#0c2a48" fill-opacity="0.85" stroke="#2880d0" stroke-width="1.05"/>
<text x="480.0" y="280.8" font-size="8.3" fill="#e8eef8" text-anchor="middle" font-family="Liberation Sans">19</text>
<circle cx="469.2" cy="288.6" r="6.4" fill="#0c2a48" fill-opacity="0.85" stroke="#2880d0" stroke-width="1.05"/>
<text x="469.2" y="291.5" font-size="8.3" fill="#e8eef8" text-anchor="middle" font-family="Liberation Sans">27</text>
<circle cx="483.8" cy="288.3" r="6.4" fill="#0c2a48" fill-opacity="0.85" stroke="#2880d0" stroke-width="1.05"/>
<text x="483.8" y="291.2" font-size="8.3" fill="#e8eef8" text-anchor="middle" font-family="Liberation Sans">26</text>
<circle cx="581.2" cy="314.5" r="6.4" fill="#0c2a48" fill-opacity="0.85" stroke="#2880d0" stroke-width="1.05"/>
<text x="581.2" y="317.4" font-size="8.3" fill="#e8eef8" text-anchor="middle" font-family="Liberation Sans">32</text>
<circle cx="674.0" cy="294.0" r="6.4" fill="#0c2a48" fill-opacity="0.85" stroke="#2880d0" stroke-width="1.05"/>
<text x="674.0" y="296.9" font-size="8.3" fill="#e8eef8" text-anchor="middle" font-family="Liberation Sans">28</text>
<circle cx="728.7" cy="297.9" r="6.4" fill="#0c2a48" fill-opacity="0.85" stroke="#2880d0" stroke-width="1.05"/>
<text x="728.7" y="300.8" font-size="8.3" fill="#e8eef8" text-anchor="middle" font-family="Liberation Sans">29</text>
<circle cx="872.3" cy="318.8" r="6.4" fill="#0c2a48" fill-opacity="0.85" stroke="#2880d0" stroke-width="1.05"/>
<text x="872.3" y="321.7" font-size="8.3" fill="#e8eef8" text-anchor="middle" font-family="Liberation Sans">33</text>
<circle cx="904.9" cy="302.9" r="6.4" fill="#0c2a48" fill-opacity="0.85" stroke="#2880d0" stroke-width="1.05"/>
<text x="904.9" y="305.8" font-size="8.3" fill="#e8eef8" text-anchor="middle" font-family="Liberation Sans">30</text>
<circle cx="956.6" cy="303.5" r="6.4" fill="#0c2a48" fill-opacity="0.85" stroke="#2880d0" stroke-width="1.05"/>
<text x="956.6" y="306.4" font-size="8.3" fill="#e8eef8" text-anchor="middle" font-family="Liberation Sans">31</text>
<polygon points="684.2,163.6 700.2,163.6 692.2,179.0" fill="#4e2626" stroke="#c03434" stroke-width="1"/>
<text x="692.2" y="170.8" font-size="8.3" fill="#e8e0e0" text-anchor="middle" font-family="Liberation Sans">1</text>
<polygon points="428.0,238.0 444.0,238.0 436.0,253.6" fill="#4e2626" stroke="#c03434" stroke-width="1"/>
<text x="436.0" y="245.2" font-size="8.3" fill="#e8e0e0" text-anchor="middle" font-family="Liberation Sans">2</text>
<polygon points="453.5,244.0 469.5,244.0 461.5,259.2" fill="#4e2626" stroke="#c03434" stroke-width="1"/>
<text x="461.5" y="251.2" font-size="8.3" fill="#e8e0e0" text-anchor="middle" font-family="Liberation Sans">3</text>
</g></svg>
<div class="b" style="left:11px;top:533px;width:1045px;height:102px;background:#f4f4f4;border-left:1px solid #dcdcdc;"></div>
<div class="b" style="left:14px;top:536px;width:1039px;height:96px;background:#ffffff;border-left:1px solid #3a94d4;border-top:1px solid #3a94d4;"></div>
<div class="b" style="left:15px;top:537px;width:1037px;height:28.5px;background:linear-gradient(#fbfbfb,#dadada);"></div>
<div class="b" style="left:14px;top:565px;width:1039px;height:1px;background:#3a94d4;"></div>
<div class="b" style="left:77px;top:536px;width:1px;height:30px;background:#3a94d4;"></div>
<div class="b" style="left:111px;top:536px;width:1px;height:30px;background:#3a94d4;"></div>
<div class="b" style="left:146px;top:536px;width:1px;height:30px;background:#3a94d4;"></div>
<div class="b" style="left:210px;top:536px;width:1px;height:30px;background:#3a94d4;"></div>
<div class="b" style="left:322px;top:536px;width:1px;height:30px;background:#3a94d4;"></div>
<div class="b" style="left:434px;top:536px;width:1px;height:30px;background:#3a94d4;"></div>
<div class="b" style="left:540px;top:536px;width:1px;height:30px;background:#3a94d4;"></div>
<div class="b" style="left:266px;top:551px;width:1px;height:15px;background:#3a94d4;"></div>
<div class="b" style="left:378px;top:551px;width:1px;height:15px;background:#3a94d4;"></div>
<div class="b" style="left:487px;top:551px;width:1px;height:15px;background:#3a94d4;"></div>
<div class="b" style="left:210px;top:551px;width:842px;height:1px;background:#3a94d4;"></div>
<div class="b" style="left:1052px;top:536px;width:1px;height:30px;background:#3a94d4;"></div>
<div class="t" style="left:16.7px;top:546.1px;font-size:8.6px;line-height:10.3px;color:#1e1e2a;font-weight:normal;">Select Spot</div>
<div class="t" style="left:79.6px;top:546.1px;font-size:8.6px;line-height:10.3px;color:#1e1e2a;font-weight:normal;">Spot #</div>
<div class="t" style="left:114.6px;top:546.1px;font-size:8.6px;line-height:10.3px;color:#1e1e2a;font-weight:normal;">Range</div>
<div class="t" style="left:150px;top:546.1px;font-size:8.6px;line-height:10.3px;color:#1e1e2a;font-weight:normal;">Freq (Hz)</div>
<div class="t" style="left:115.69999999999999px;width:300px;text-align:center;top:538.9px;font-size:8.2px;line-height:9.8px;color:#1e1e2a;font-weight:normal;">Scan CISPR +Pk</div>
<div class="t" style="left:228px;width:300px;text-align:center;top:538.9px;font-size:8.2px;line-height:9.8px;color:#1e1e2a;font-weight:normal;">Spot CISPR QPk</div>
<div class="t" style="left:337px;width:300px;text-align:center;top:538.9px;font-size:8.2px;line-height:9.8px;color:#1e1e2a;font-weight:normal;">Ambient CISPR +Pk</div>
<div class="t" style="left:87.6px;width:300px;text-align:center;top:553.4px;font-size:8.6px;line-height:10.3px;color:#1e1e2a;font-weight:normal;">Ampl</div>
<div class="t" style="left:143.60000000000002px;width:300px;text-align:center;top:553.4px;font-size:8.6px;line-height:10.3px;color:#1e1e2a;font-weight:normal;">Delta(Limit1)</div>
<div class="t" style="left:199.95px;width:300px;text-align:center;top:553.4px;font-size:8.6px;line-height:10.3px;color:#1e1e2a;font-weight:normal;">Ampl</div>
<div class="t" style="left:256.25px;width:300px;text-align:center;top:553.4px;font-size:8.6px;line-height:10.3px;color:#1e1e2a;font-weight:normal;">Delta(Limit1)</div>
<div class="t" style="left:310.5px;width:300px;text-align:center;top:553.4px;font-size:8.6px;line-height:10.3px;color:#1e1e2a;font-weight:normal;">Ampl</div>
<div class="t" style="left:363.1px;width:300px;text-align:center;top:553.4px;font-size:8.6px;line-height:10.3px;color:#1e1e2a;font-weight:normal;">Delta(Scan)</div>
<div class="b" style="left:15px;top:566.0px;width:61.7px;height:13.9px;background:linear-gradient(#e0f6fe,#3cc6f8);"></div>
<div class="b" style="left:77.7px;top:566.0px;width:33.7px;height:13.9px;background:#b52525;"></div>
<div class="b" style="left:210.7px;top:566.0px;width:54.8px;height:13.9px;background:#b52525;"></div>
<div class="b" style="left:40px;top:568.8px;width:10px;height:9.2px;background:linear-gradient(#ffffff,#dedede);border:1px solid #6aa8d8;border-radius:2px;"></div>
<div class="t" style="left:80px;top:567.5px;font-size:8.7px;line-height:10.4px;color:#ffffff;font-weight:normal;">1</div>
<div class="t" style="left:114.8px;top:567.5px;font-size:8.7px;line-height:10.4px;color:#1e1e2a;font-weight:normal;">A</div>
<div class="t" style="left:149.5px;top:567.5px;font-size:8.7px;line-height:10.4px;color:#1e1e2a;font-weight:normal;">152.162 MHz</div>
<div class="t" style="left:213px;top:567.5px;font-size:8.7px;line-height:10.4px;color:#ffffff;font-weight:normal;">62.4 dBuV...</div>
<div class="t" style="left:268.5px;top:567.5px;font-size:8.7px;line-height:10.4px;color:#1e1e2a;font-weight:normal;">22.4 dBuV...</div>
<div class="t" style="left:324.5px;top:567.5px;font-size:8.7px;line-height:10.4px;color:#1e1e2a;font-weight:normal;">-- dBuV/m</div>
<div class="t" style="left:381px;top:567.5px;font-size:8.7px;line-height:10.4px;color:#1e1e2a;font-weight:normal;">-- dBuV/m</div>
<div class="t" style="left:437px;top:567.5px;font-size:8.7px;line-height:10.4px;color:#1e1e2a;font-weight:normal;">--- dBuV/m</div>
<div class="t" style="left:489.5px;top:567.5px;font-size:8.7px;line-height:10.4px;color:#1e1e2a;font-weight:normal;">--- dBuV/m</div>
<div class="b" style="left:77.7px;top:579.9px;width:33.7px;height:13.9px;background:#b52525;"></div>
<div class="b" style="left:210.7px;top:579.9px;width:54.8px;height:13.9px;background:#b52525;"></div>
<div class="b" style="left:40px;top:582.6999999999999px;width:10px;height:9.2px;background:linear-gradient(#ffffff,#dedede);border:1px solid #6aa8d8;border-radius:2px;"></div>
<div class="t" style="left:80px;top:581.4px;font-size:8.7px;line-height:10.4px;color:#ffffff;font-weight:normal;">2</div>
<div class="t" style="left:114.8px;top:581.4px;font-size:8.7px;line-height:10.4px;color:#1e1e2a;font-weight:normal;">A</div>
<div class="t" style="left:149.5px;top:581.4px;font-size:8.7px;line-height:10.4px;color:#1e1e2a;font-weight:normal;">97.275 MHz</div>
<div class="t" style="left:213px;top:581.4px;font-size:8.7px;line-height:10.4px;color:#ffffff;font-weight:normal;">42.4 dBuV...</div>
<div class="t" style="left:268.5px;top:581.4px;font-size:8.7px;line-height:10.4px;color:#1e1e2a;font-weight:normal;">2.37 dBuV...</div>
<div class="t" style="left:324.5px;top:581.4px;font-size:8.7px;line-height:10.4px;color:#1e1e2a;font-weight:normal;">-- dBuV/m</div>
<div class="t" style="left:381px;top:581.4px;font-size:8.7px;line-height:10.4px;color:#1e1e2a;font-weight:normal;">-- dBuV/m</div>
<div class="t" style="left:437px;top:581.4px;font-size:8.7px;line-height:10.4px;color:#1e1e2a;font-weight:normal;">--- dBuV/m</div>
<div class="t" style="left:489.5px;top:581.4px;font-size:8.7px;line-height:10.4px;color:#1e1e2a;font-weight:normal;">--- dBuV/m</div>
<div class="b" style="left:77.7px;top:593.8px;width:33.7px;height:13.9px;background:#b52525;"></div>
<div class="b" style="left:210.7px;top:593.8px;width:54.8px;height:13.9px;background:#b52525;"></div>
<div class="b" style="left:40px;top:596.5999999999999px;width:10px;height:9.2px;background:linear-gradient(#ffffff,#dedede);border:1px solid #6aa8d8;border-radius:2px;"></div>
<div class="t" style="left:80px;top:595.3px;font-size:8.7px;line-height:10.4px;color:#ffffff;font-weight:normal;">3</div>
<div class="t" style="left:114.8px;top:595.3px;font-size:8.7px;line-height:10.4px;color:#1e1e2a;font-weight:normal;">A</div>
<div class="t" style="left:149.5px;top:595.3px;font-size:8.7px;line-height:10.4px;color:#1e1e2a;font-weight:normal;">102.725 MHz</div>
<div class="t" style="left:213px;top:595.3px;font-size:8.7px;line-height:10.4px;color:#ffffff;font-weight:normal;">40.7 dBuV...</div>
<div class="t" style="left:268.5px;top:595.3px;font-size:8.7px;line-height:10.4px;color:#1e1e2a;font-weight:normal;">0.698 dBu...</div>
<div class="t" style="left:324.5px;top:595.3px;font-size:8.7px;line-height:10.4px;color:#1e1e2a;font-weight:normal;">-- dBuV/m</div>
<div class="t" style="left:381px;top:595.3px;font-size:8.7px;line-height:10.4px;color:#1e1e2a;font-weight:normal;">-- dBuV/m</div>
<div class="t" style="left:437px;top:595.3px;font-size:8.7px;line-height:10.4px;color:#1e1e2a;font-weight:normal;">--- dBuV/m</div>
<div class="t" style="left:489.5px;top:595.3px;font-size:8.7px;line-height:10.4px;color:#1e1e2a;font-weight:normal;">--- dBuV/m</div>
<div class="b" style="left:77.7px;top:607.7px;width:33.7px;height:12.299999999999955px;background:#ff5500;"></div>
<div class="b" style="left:210.7px;top:607.7px;width:54.8px;height:12.299999999999955px;background:#ff5500;"></div>
<div class="b" style="left:40px;top:610.5px;width:10px;height:9.2px;background:linear-gradient(#ffffff,#dedede);border:1px solid #6aa8d8;border-radius:2px;"></div>
<div class="t" style="left:80px;top:609.2px;font-size:8.7px;line-height:10.4px;color:#ffffff;font-weight:normal;">4</div>
<div class="t" style="left:114.8px;top:609.2px;font-size:8.7px;line-height:10.4px;color:#1e1e2a;font-weight:normal;">A</div>
<div class="t" style="left:149.5px;top:609.2px;font-size:8.7px;line-height:10.4px;color:#1e1e2a;font-weight:normal;">120.012 MHz</div>
<div class="t" style="left:213px;top:609.2px;font-size:8.7px;line-height:10.4px;color:#ffe0c0;font-weight:normal;">38.8 dBuV...</div>
<div class="t" style="left:268.5px;top:609.2px;font-size:8.7px;line-height:10.4px;color:#1e1e2a;font-weight:normal;">-1.19 dBu...</div>
<div class="t" style="left:324.5px;top:609.2px;font-size:8.7px;line-height:10.4px;color:#1e1e2a;font-weight:normal;">-- dBuV/m</div>
<div class="t" style="left:381px;top:609.2px;font-size:8.7px;line-height:10.4px;color:#1e1e2a;font-weight:normal;">-- dBuV/m</div>
<div class="t" style="left:437px;top:609.2px;font-size:8.7px;line-height:10.4px;color:#1e1e2a;font-weight:normal;">--- dBuV/m</div>
<div class="t" style="left:489.5px;top:609.2px;font-size:8.7px;line-height:10.4px;color:#1e1e2a;font-weight:normal;">--- dBuV/m</div>
<div class="b" style="left:77px;top:566px;width:1px;height:54px;background:#ececec;"></div>
<div class="b" style="left:111px;top:566px;width:1px;height:54px;background:#ececec;"></div>
<div class="b" style="left:146px;top:566px;width:1px;height:54px;background:#ececec;"></div>
<div class="b" style="left:210px;top:566px;width:1px;height:54px;background:#ececec;"></div>
<div class="b" style="left:266px;top:566px;width:1px;height:54px;background:#ececec;"></div>
<div class="b" style="left:322px;top:566px;width:1px;height:54px;background:#ececec;"></div>
<div class="b" style="left:378px;top:566px;width:1px;height:54px;background:#ececec;"></div>
<div class="b" style="left:434px;top:566px;width:1px;height:54px;background:#ececec;"></div>
<div class="b" style="left:487px;top:566px;width:1px;height:54px;background:#ececec;"></div>
<div class="b" style="left:540px;top:566px;width:1px;height:54px;background:#ececec;"></div>
<div class="b" style="left:15px;top:579px;width:525px;height:1px;background:#e4e4e4;"></div>
<div class="b" style="left:77.7px;top:579px;width:33.7px;height:1px;background:#d89090;"></div>
<div class="b" style="left:210.7px;top:579px;width:54.8px;height:1px;background:#d89090;"></div>
<div class="b" style="left:15px;top:593px;width:525px;height:1px;background:#e4e4e4;"></div>
<div class="b" style="left:77.7px;top:593px;width:33.7px;height:1px;background:#d89090;"></div>
<div class="b" style="left:210.7px;top:593px;width:54.8px;height:1px;background:#d89090;"></div>
<div class="b" style="left:15px;top:607px;width:525px;height:1px;background:#e4e4e4;"></div>
<div class="b" style="left:77.7px;top:607px;width:33.7px;height:1px;background:#d89090;"></div>
<div class="b" style="left:210.7px;top:607px;width:54.8px;height:1px;background:#d89090;"></div>
<div class="b" style="left:1041px;top:566px;width:12px;height:54px;background:#ffffff;border-left:1px solid #e0e0e0;"></div>
<div class="b" style="left:1041.5px;top:566.5px;width:11px;height:13px;background:linear-gradient(#ffffff,#e4eef6);border:1px solid #4a9ad8;border-radius:2px;"></div>
<div class="b" style="left:1041.5px;top:580px;width:11px;height:10px;background:linear-gradient(#ffffff,#e4eef6);border:1px solid #4a9ad8;border-radius:2px;"></div>
<div class="b" style="left:1041.5px;top:606px;width:11px;height:13px;background:linear-gradient(#ffffff,#e4eef6);border:1px solid #4a9ad8;border-radius:2px;"></div>
<svg width="1071" height="720"><polyline points="1044.5,574.5 1047,572 1049.5,574.5" fill="none" stroke="#2a7ac8" stroke-width="1"/><polyline points="1044.5,611 1047,613.5 1049.5,611" fill="none" stroke="#2a7ac8" stroke-width="1"/><line x1="1044.5" y1="584" x2="1049.5" y2="584" stroke="#2a7ac8"/><line x1="1044.5" y1="586.5" x2="1049.5" y2="586.5" stroke="#2a7ac8"/></svg>
<div class="b" style="left:15px;top:620px;width:1037px;height:12px;background:#f8f8f8;border-top:1px solid #e8e8e8;"></div>
<div class="b" style="left:15px;top:621px;width:12px;height:11px;background:linear-gradient(#ffffff,#eeeeee);border:1px solid #c8dcea;border-radius:2px;"></div>
<div class="b" style="left:1029px;top:621px;width:12px;height:11px;background:linear-gradient(#ffffff,#eeeeee);border:1px solid #c8dcea;border-radius:2px;"></div>
<svg width="1071" height="720"><polyline points="22,624 19.5,626.5 22,629" fill="none" stroke="#9ab8d0" stroke-width="1"/><polyline points="1034,624 1036.5,626.5 1034,629" fill="none" stroke="#9ab8d0" stroke-width="1"/></svg>
<div class="b" style="left:10px;top:634px;width:1046px;height:1.5px;background:#3a94d4;"></div>
<div class="b" style="left:10px;top:635.5px;width:1046px;height:26px;background:#fcfcfc;"></div>
<div class="t" style="left:9.4px;top:644.1px;font-size:10.2px;line-height:12.2px;color:#1e1e2a;font-weight:normal;">EMC-EMI</div>
<div class="t" style="left:88.5px;top:644.1px;font-size:10.2px;line-height:12.2px;color:#1e1e2a;font-weight:normal;">Frequency</div>
<div class="b" style="left:140px;top:640.5px;width:65.5px;height:17px;background:#ffffff;border:1px solid #c8c8c8;"></div>
<div class="t" style="left:142.5px;top:644.1px;font-size:10.2px;line-height:12.2px;color:#1e1e2a;font-weight:normal;">668.322 MHz</div>
<div class="t" style="left:342px;top:644.1px;font-size:10.2px;line-height:12.2px;color:#1e1e2a;font-weight:normal;">Ref Lev</div>
<div class="b" style="left:382px;top:640.5px;width:65.5px;height:17px;background:#ffffff;border:1px solid #c8c8c8;"></div>
<div class="t" style="left:384px;top:644.1px;font-size:10.2px;line-height:12.2px;color:#1e1e2a;font-weight:normal;">80.0 dBuV/m</div>
<div class="b" style="left:951px;top:641px;width:42px;height:17px;background:linear-gradient(#fdfdfd,#e4e4e4);border:1px solid #6ab0e0;border-radius:2px;"></div>
<div class="t" style="left:822px;width:300px;text-align:center;top:644.1px;font-size:10.2px;line-height:12.2px;color:#1e1e2a;font-weight:normal;">Markers</div>
<div class="b" style="left:997px;top:641px;width:36px;height:17px;background:linear-gradient(#fdfdfd,#e4e4e4);border:1px solid #6ab0e0;border-radius:2px;"></div>
<div class="t" style="left:865px;width:300px;text-align:center;top:644.1px;font-size:10.2px;line-height:12.2px;color:#1e1e2a;font-weight:normal;">Traces</div>
<div class="b" style="left:1035px;top:641px;width:19px;height:17px;background:linear-gradient(#fdfdfd,#e4e4e4);border:1px solid #6ab0e0;border-radius:2px;"></div>
<svg width="1071" height="720"><g transform="translate(1044.5,649.5)">
<circle r="4.6" fill="none" stroke="#000" stroke-width="2.8"/>
<g fill="#000">
<rect x="-1.5" y="-7.4" width="3" height="3.2"/><rect x="-1.5" y="4.2" width="3" height="3.2"/>
<rect x="-7.4" y="-1.5" width="3.2" height="3"/><rect x="4.2" y="-1.5" width="3.2" height="3"/>
<g transform="rotate(45)"><rect x="-1.5" y="-7.4" width="3" height="3.2"/><rect x="-1.5" y="4.2" width="3" height="3.2"/>
<rect x="-7.4" y="-1.5" width="3.2" height="3"/><rect x="4.2" y="-1.5" width="3.2" height="3"/></g>
</g></g></svg>
<div class="b" style="left:7px;top:661px;width:1052px;height:22px;background:linear-gradient(#fbfbfb,#e6e6e6);border:1px solid #8cc8ec;"></div>
<div class="b" style="left:76px;top:662px;width:1px;height:20px;background:#d0d0d0;"></div>
<div class="b" style="left:77px;top:662px;width:1px;height:20px;background:#ffffff;"></div>
<div class="b" style="left:272px;top:662px;width:1px;height:20px;background:#d0d0d0;"></div>
<div class="b" style="left:273px;top:662px;width:1px;height:20px;background:#ffffff;"></div>
<div class="b" style="left:318px;top:662px;width:1px;height:20px;background:#d0d0d0;"></div>
<div class="b" style="left:319px;top:662px;width:1px;height:20px;background:#ffffff;"></div>
<div class="b" style="left:392px;top:662px;width:1px;height:20px;background:#d0d0d0;"></div>
<div class="b" style="left:393px;top:662px;width:1px;height:20px;background:#ffffff;"></div>
<div class="b" style="left:442px;top:662px;width:1px;height:20px;background:#d0d0d0;"></div>
<div class="b" style="left:443px;top:662px;width:1px;height:20px;background:#ffffff;"></div>
<div class="b" style="left:498px;top:662px;width:1px;height:20px;background:#d0d0d0;"></div>
<div class="b" style="left:499px;top:662px;width:1px;height:20px;background:#ffffff;"></div>
<div class="b" style="left:554px;top:662px;width:1px;height:20px;background:#d0d0d0;"></div>
<div class="b" style="left:555px;top:662px;width:1px;height:20px;background:#ffffff;"></div>
<div class="b" style="left:592px;top:662px;width:1px;height:20px;background:#d0d0d0;"></div>
<div class="b" style="left:593px;top:662px;width:1px;height:20px;background:#ffffff;"></div>
<div class="t" style="left:13px;top:667.7px;font-size:8.2px;line-height:9.8px;color:#1e1e2a;font-weight:normal;">Stopped</div>
<div class="t" style="left:81px;top:667.7px;font-size:8.2px;line-height:9.8px;color:#1e1e2a;font-weight:normal;">Not aligned</div>
<div class="t" style="left:277px;top:667.7px;font-size:8.2px;line-height:9.8px;color:#1e1e2a;font-weight:normal;">Swept</div>
<div class="t" style="left:323px;top:667.7px;font-size:8.2px;line-height:9.8px;color:#1e1e2a;font-weight:normal;">Free Run</div>
<div class="t" style="left:396px;top:667.7px;font-size:8.2px;line-height:9.8px;color:#1e1e2a;font-weight:normal;">Ref: Int</div>
<svg width="1071" height="720"><g transform="translate(1043.5,672) rotate(-40)"><ellipse rx="5" ry="2.6" fill="#3aa040"/><ellipse rx="3" ry="1.2" cx="-0.5" cy="-0.6" fill="#8ae080"/></g></svg>
<div class="b" style="left:8px;top:683px;width:1050.5px;height:28px;background:#283a3f;"></div>
<div class="b" style="left:41px;top:683px;width:241px;height:28px;background:#f2f2f2;"></div>
<svg width="1071" height="720">
<g fill="#ffffff">
<polygon points="18.5,692.8 23.6,692 23.6,697 18.5,697"/>
<polygon points="24.4,691.9 30,691.1 30,697 24.4,697"/>
<polygon points="18.5,697.8 23.6,697.8 23.6,702.6 18.5,702"/>
<polygon points="24.4,697.8 30,697.8 30,703.3 24.4,702.7"/>
</g>
<circle cx="54.9" cy="697.4" r="6.3" fill="none" stroke="#111" stroke-width="1.9"/>
<rect x="265.5" y="692.5" width="5" height="7.5" rx="2.5" fill="none" stroke="#333" stroke-width="1.1"/>
<path d="M264.2,698 Q268,704 271.8,698 M268,701.5 V704 M265.5,704 H270.5" fill="none" stroke="#333" stroke-width="1"/>
<!-- task view -->
<g fill="none" stroke="#d8dcdc" stroke-width="1.2"><rect x="295" y="693" width="7" height="9"/><line x1="293" y1="692" x2="293" y2="703"/><line x1="304" y1="692" x2="304" y2="695"/><line x1="304" y1="697" x2="304" y2="699"/><line x1="304" y1="701" x2="304" y2="703"/></g>
<!-- edge -->
<path d="M341,699 H330.8 C331,703 336,704.8 340.5,702.5 V705 C334,707.5 328,704 328.3,698 C328.5,691.5 334,689.5 337.5,690 C341,690.5 342,694 341,699 Z M331,696.8 H338 C337.8,693.3 332.5,693 331,696.8 Z" fill="#1e8ee8" fill-rule="evenodd"/>
<rect x="320.5" y="709" width="29" height="2" fill="#74b4e8"/>
<!-- explorer -->
<path d="M362.5,692 H368 L369.5,693.5 H376.5 V704 H362.5 Z" fill="#f4c84a"/>
<rect x="362.5" y="695.5" width="14" height="8.5" fill="#fde08a"/>
<rect x="366" y="699" width="7" height="4" fill="#4aa0e0"/>
<rect x="356" y="709" width="27" height="2" fill="#74b4e8"/>
<!-- store -->
<path d="M400,692.5 C400,688 407,688 407,692.5" fill="none" stroke="#fff" stroke-width="1.3"/>
<rect x="396" y="692" width="15.5" height="13" fill="#ffffff"/>
<rect x="400.5" y="695.5" width="3" height="3" fill="#f25022"/><rect x="404" y="695.5" width="3" height="3" fill="#7fba00"/>
<rect x="400.5" y="699" width="3" height="3" fill="#00a4ef"/><rect x="404" y="699" width="3" height="3" fill="#ffb900"/>
<!-- app1 -->
<rect x="429.5" y="689.5" width="17" height="16" fill="#111" stroke="#555" stroke-width="0.8"/>
<path d="M431,703 L433,697 L436,699 L440,694 L445,691" fill="none" stroke="#e02020" stroke-width="2"/>
<path d="M437,698 L440,694 L445,691 L445,697 L437,700 Z" fill="#20c020"/>
<path d="M431,698 L433,697 L434,703 Z" fill="#e02020"/>
<!-- app2 -->
<rect x="463.5" y="689.5" width="18" height="16" fill="#0a0a0a"/>
<path d="M465,703 L468,698 L471,700 L474,695 L477,693 L480,690" fill="none" stroke="#e8e020" stroke-width="1.6"/>
<g fill="#20c030"><rect x="474" y="692" width="1.5" height="8"/><rect x="476.5" y="690" width="1.5" height="10"/><rect x="479" y="689.5" width="1.5" height="10"/></g>
<g fill="#e02020"><rect x="465" y="698" width="1.5" height="6"/><rect x="467.5" y="697" width="1.5" height="6"/><rect x="470" y="699" width="1.5" height="5"/></g>
<!-- mail -->
<path d="M498.5,695 L507,690.5 L515.5,695 V704 H498.5 Z" fill="#ffffff"/>
<path d="M498.5,695 L507,700 L515.5,695" fill="none" stroke="#283a3f" stroke-width="1.2"/>
<!-- active tek app -->
<rect x="524.5" y="683" width="26" height="28" fill="#4f5f66"/>
<rect x="532" y="689.5" width="17.5" height="16" fill="#3a78c0"/>
<rect x="533" y="690.5" width="15.5" height="2.5" fill="#dde8f4"/>
<polyline points="532.5,703.5 535.5,703.5 537,699 538.5,703.5 541,703.5 542.5,697 544,703.5 549,703.5" fill="none" stroke="#ffffff" stroke-width="1"/>
<!-- tray -->
<g fill="none" stroke="#e0e4e4" stroke-width="1">
<circle cx="771" cy="696" r="2"/><path d="M767.5,703 C767.5,699 774.5,699 774.5,703"/>
<circle cx="776" cy="693.5" r="1.8"/><path d="M773.5,698.5 C774,696 779,696 779,699"/>
<polyline points="796.5,700 800.5,696 804.5,700"/>
<rect x="818" y="692.5" width="11" height="8"/><line x1="817" y1="703" x2="830" y2="703"/><polyline points="821,697.5 823.5,695 826,697.5"/>
<rect x="886" y="694" width="10.5" height="6.5"/><rect x="884" y="692.5" width="4" height="2"/>
<path d="M909,702.5 A8,8 0 0 1 917,694.5 M911.5,702.5 A5.5,5.5 0 0 1 917,697 M914,702.5 A3,3 0 0 1 917,699.5"/>
<path d="M930,695.5 H932 L935,693 V702 L932,699.5 H930 Z M937,695 Q938.5,697.5 937,700 M939,693.5 Q941.5,697.5 939,701.5"/>
<path d="M955,703 C956,700 958,699 960,697 C962,695 963,692 961,692 C959,692 959,697 961,699 C962,700 964,699 965,698"/>
<path d="M1030.5,691.5 H1042.5 V700.5 H1035 L1032,703.5 V700.5 H1030.5 Z"/>
</g>
<g fill="#e0e4e4">
<path d="M842,693 L845,691 L848,693 L845,695 Z M848,693 L851,691 L854,693 L851,695 Z M842,697 L845,695 L848,697 L845,699 Z M848,697 L851,695 L854,697 L851,699 Z M845,700.5 L848,698.5 L851,700.5 L848,702.5 Z"/>
<path d="M860,700.5 C858,700.5 858,697 861,697 C861.5,694 866,693.5 867.5,696 C870,695 872,697 871.5,700.5 Z"/>
</g>
</svg>
<div class="t" style="left:848px;width:300px;text-align:center;top:686.4px;font-size:8.6px;line-height:10.3px;color:#f0f0f0;font-weight:normal;">3:32 PM</div>
<div class="t" style="left:848px;width:300px;text-align:center;top:698.4px;font-size:8.6px;line-height:10.3px;color:#f0f0f0;font-weight:normal;">11/12/2018</div>
<div class="t" style="left:69.2px;top:691.7px;font-size:9.8px;line-height:11.8px;color:#404040;font-weight:normal;">Type here to search</div>
</body></html>
